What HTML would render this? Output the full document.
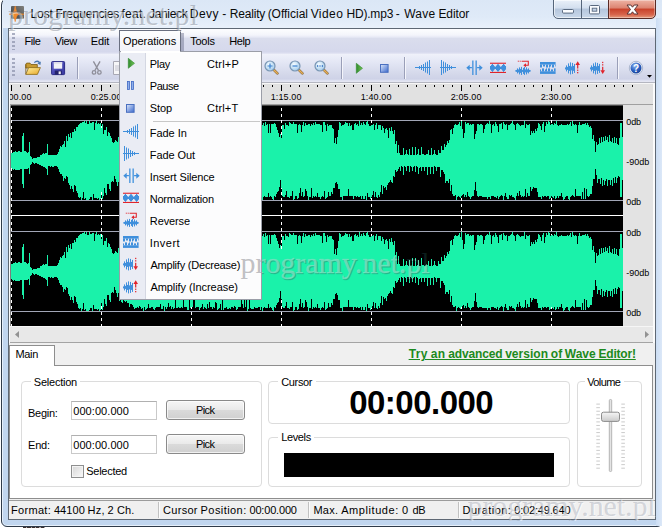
<!DOCTYPE html>
<html><head><meta charset="utf-8"><title>Wave Editor</title>
<style>
html,body{margin:0;padding:0}
body{width:662px;height:528px;overflow:hidden;background:#fff;position:relative;font-family:"Liberation Sans",sans-serif}
.t{position:absolute;white-space:pre;line-height:1}
#win{position:absolute;left:1px;top:-3px;width:660px;height:528px;border:1px solid #2f3b4a;border-radius:8px 8px 6px 6px;background:#c1d6ef;box-shadow:inset 0 0 0 1px #e6f0fb}
#titlegrad{position:absolute;left:3px;top:0;width:659px;height:28px;background:linear-gradient(#dbe7f6 0,#dfeaf8 17px,#e9f1fb 28px)}
#client{position:absolute;left:8px;top:28px;width:646px;height:490px;border:1px solid #5e6874;background:#f0f0f0}
#capmm{position:absolute;left:553px;top:-1px;width:55px;height:18px;border:1px solid #55657a;border-radius:0 0 0 5px;background:linear-gradient(#e9f0f9 0%,#d3dfee 45%,#b5c6dc 50%,#c9d8ea 100%);box-shadow:inset 0 0 0 1px rgba(255,255,255,.6)}
#capdiv{position:absolute;left:581px;top:0;width:1px;height:18px;background:#55657a}
#capx{position:absolute;left:608px;top:-1px;width:46px;height:18px;border:1px solid #5a2a24;border-radius:0 0 5px 0;background:linear-gradient(#eeb3a4 0%,#dc8370 45%,#c8412a 50%,#d7634a 80%,#e59a7c 100%);box-shadow:inset 0 0 0 1px rgba(255,255,255,.35)}
#menubar{position:absolute;left:9px;top:29px;width:646px;height:25px;background:linear-gradient(#fdfdff 0,#f4f5fb 6px,#e8eaf6 8px,#dadded 9.5px,#d5d8ec 23px,#e2e4f3 24.5px,#e8eaf6 25px)}
#toolbar{position:absolute;left:9px;top:54px;width:646px;height:28px;background:linear-gradient(#eff1fa 0,#e4e7f5 8px,#d4d8ea 20px,#ced2e7 25px,#dde0f0 26.5px,#e6e8f3 28px,#b4b6c0 28.4px,#b4b6c0 29px);height:29px}
.grip{position:absolute;width:3px;background:repeating-linear-gradient(#8a90aa 0,#8a90aa 2px,transparent 2px,transparent 4px);opacity:.7}
#opbtn{position:absolute;left:119px;top:30px;width:60px;height:23px;box-shadow:3px 3px 0 rgba(95,100,130,.42);border:1px solid #6a6f80;border-bottom:none;background:linear-gradient(#fdfdfe,#f0f1f8)}
#ruler{position:absolute;left:10px;top:83px;width:643px;height:22px;background:#e1e1e1;border-top:1px solid #f6f6f6;border-bottom:1px solid #a0a0a0;box-sizing:border-box}
#rulerclip{position:absolute;left:10px;top:83px;width:643px;height:22px;overflow:hidden}
#rulerclip .t{margin-left:-10px;margin-top:-83px}
#hscroll{position:absolute;left:10px;top:326px;width:643px;height:17px;background:#e8e8e8;border-top:1px solid #f6f6f6;border-bottom:1px solid #a4a4a4;box-sizing:border-box}
#dd{position:absolute;left:119px;top:51px;width:141px;height:247px;border:1px solid #9b9ea8;background:#fcfcfd;overflow:hidden}
#ddgut{position:absolute;left:0;top:0;width:25px;height:247px;background:#eaecf4;border-right:1px solid #d4d7e2}
#ddshadow{position:absolute;left:122px;top:55px;width:142px;height:247px;background:rgba(0,0,0,.18);border-radius:2px}
#tabbar{position:absolute;left:10px;top:343px;width:643px;height:23px;background:#f0f0f0}
#panel{position:absolute;left:9px;top:365px;width:644px;height:134px;border:1px solid #8e8e8e;background:#fff;box-sizing:border-box}
#tab{position:absolute;left:9px;top:345px;width:46px;height:21px;border:1px solid #8e8e8e;border-bottom:none;background:#fff;box-sizing:border-box}
.gb{position:absolute;border:1px solid #dcdcdc;border-radius:4px;box-sizing:border-box}
.inp{position:absolute;width:86px;height:19px;border:1px solid #c9c9c9;border-top-color:#b0b0b0;background:#fff;box-sizing:border-box}
.btn{position:absolute;width:79px;height:20px;border:1px solid #8a8a8a;border-radius:3px;background:linear-gradient(#f6f6f6 0%,#eaeaea 48%,#dadada 52%,#d0d0d0 100%);box-shadow:inset 0 0 0 1px rgba(255,255,255,.7);box-sizing:border-box}
#chk{position:absolute;left:71px;top:465px;width:13px;height:13px;border:1px solid #8e8f8f;background:linear-gradient(135deg,#d6d6d6,#fafafa);box-shadow:inset 0 0 0 1px #f4f4f4;box-sizing:border-box}
#status{position:absolute;left:9px;top:500px;width:646px;height:19px;background:#f0f0f0;border-top:1px solid #9c9c9c;box-sizing:border-box}
.wm{position:absolute;white-space:nowrap;font-family:"Liberation Serif",serif;line-height:1;letter-spacing:.5px}
</style></head>
<body>
<div id="win"></div>
<div id="titlegrad"></div>
<div style="position:absolute;left:656px;top:18px;width:6px;height:508px;background:linear-gradient(90deg,#cbddf3,#dce8f8)"></div>
<div id="client"></div>
<svg style="position:absolute;left:9px;top:5px;overflow:visible;" width="16" height="17" viewBox="0 0 16 17"><defs><linearGradient id="ai" x1="0" y1="1" x2="1" y2="0"><stop offset="0" stop-color="#3c4044"/><stop offset="1" stop-color="#80807c"/></linearGradient></defs><rect x="2" y="1" width="13" height="12.8" rx="1" fill="url(#ai)"/><path d="M.2 9.2h14.8" stroke="#f0842a" stroke-width="1.1"/><path d="M6.2 1.2C6.9 5.5 7.8 7.6 9.2 9.2C7.8 10.8 6.9 12.3 6.2 16.6C5.5 12.3 4.6 10.8 3.2 9.2C4.6 7.6 5.5 5.5 6.2 1.2z" fill="#f08a30" stroke="#f08a30" stroke-width=".7" stroke-linejoin="round"/></svg>
<div id="capmm"></div><div id="capdiv"></div><div id="capx"></div>
<svg style="position:absolute;left:562px;top:8.5px;overflow:visible;" width="12" height="5" viewBox="0 0 12 5"><rect x=".5" y=".5" width="11" height="3.6" rx="1" fill="#fafcff" stroke="#5a6a80" stroke-width="1"/></svg>
<svg style="position:absolute;left:589px;top:4.5px;overflow:visible;" width="11" height="9.5" viewBox="0 0 11 9.5"><rect x=".5" y=".5" width="10" height="8.4" rx="1" fill="#fafcff" stroke="#5a6a80" stroke-width="1"/><rect x="3.2" y="3.2" width="4.6" height="3" fill="#c3d2e6" stroke="#5a6a80" stroke-width=".9"/></svg>
<svg style="position:absolute;left:626px;top:3.5px;overflow:visible;" width="13" height="11" viewBox="0 0 13 11"><path d="M1 1h3.8l1.7 2.2l1.7-2.2h3.8l-3.5 4.5l3.5 4.5h-3.8l-1.7-2.2l-1.7 2.2h-3.8l3.5-4.5z" fill="#fff" stroke="#5a3434" stroke-width="1" stroke-linejoin="round"/></svg>
<div id="menubar"></div>
<div class="grip" style="left:12px;top:33px;height:17px"></div>
<div id="opbtn"></div>
<div id="toolbar"></div>
<div class="grip" style="left:12px;top:58px;height:20px"></div>
<div style="position:absolute;left:77px;top:57px;width:1px;height:22px;background:#9a9fb8"></div><div style="position:absolute;left:78px;top:57px;width:1px;height:22px;background:#f4f5fb"></div>
<div style="position:absolute;left:341px;top:57px;width:1px;height:22px;background:#9a9fb8"></div><div style="position:absolute;left:342px;top:57px;width:1px;height:22px;background:#f4f5fb"></div>
<div style="position:absolute;left:404px;top:57px;width:1px;height:22px;background:#9a9fb8"></div><div style="position:absolute;left:405px;top:57px;width:1px;height:22px;background:#f4f5fb"></div>
<div style="position:absolute;left:617px;top:57px;width:1px;height:22px;background:#9a9fb8"></div><div style="position:absolute;left:618px;top:57px;width:1px;height:22px;background:#f4f5fb"></div>
<svg style="position:absolute;left:25px;top:60px;overflow:visible;" width="17" height="16" viewBox="0 0 17 16"><path d="M.8 4.3l.8-1.2h3.4l1 1.4h6.3v3.5h-11.5z" fill="#c89a30" stroke="#7a5a12" stroke-width=".8"/><path d="M.8 14.3v-10" stroke="#7a5a12" stroke-width=".8"/><defs><linearGradient id="fg" x1="0" y1="0" x2="1" y2="1"><stop offset="0" stop-color="#fff0a0"/><stop offset="1" stop-color="#e8a828"/></linearGradient></defs><path d="M3.6 7.6h11.8l-3 6.8h-11.6z" fill="url(#fg)" stroke="#8a6818" stroke-width=".8" stroke-linejoin="round"/><path d="M9.3 2.6c1.9-2 4.4-1.7 5.3.4" fill="none" stroke="#4a78b0" stroke-width="1.3"/><path d="M15.9 1.4l-.5 3.6-3-1.5z" fill="#4a78b0"/></svg>
<svg style="position:absolute;left:50.6px;top:61px;overflow:visible;" width="15" height="14.5" viewBox="0 0 15 14.5"><defs><linearGradient id="sv" x1="0" y1="0" x2="1" y2="1"><stop offset="0" stop-color="#7a7ad8"/><stop offset=".5" stop-color="#4848b4"/><stop offset="1" stop-color="#3a3aa0"/></linearGradient></defs><rect x=".6" y=".6" width="13" height="13" rx=".8" fill="url(#sv)" stroke="#2a2a86" stroke-width="1"/><rect x="2.8" y="1.1" width="8.4" height="6.6" fill="#f2f2f6"/><rect x="2.8" y="1.1" width="8.4" height="1.6" fill="#dcdce8"/><rect x="3.8" y="9.6" width="7" height="4" fill="#22226a"/><rect x="7.6" y="10.4" width="2.2" height="2.8" fill="#eeeef4"/></svg>
<svg style="position:absolute;left:90.6px;top:60.8px;overflow:visible;" width="12" height="14" viewBox="0 0 13 15"><path d="M2.6 .4l5.6 9.8M9.8 .4l-5.6 9.8" stroke="#8f8f9a" stroke-width="1.5" fill="none"/><circle cx="3.3" cy="12.3" r="1.9" fill="none" stroke="#8f8f9a" stroke-width="1.4"/><circle cx="9.1" cy="12.3" r="1.9" fill="none" stroke="#8f8f9a" stroke-width="1.4"/></svg>
<svg style="position:absolute;left:113px;top:61px;overflow:visible;" width="10" height="14" viewBox="0 0 10 14"><path d="M.5 .5h6l3 3v10h-9z" fill="#f6f6f8" stroke="#a8a8b4"/><path d="M2 5h5M2 7h5M2 9h5" stroke="#b8b8c4" stroke-width=".8"/></svg>
<svg style="position:absolute;left:263.5px;top:59.5px;overflow:visible;" width="16" height="16" viewBox="0 0 16 16"><defs><radialGradient id="zg1" cx=".4" cy=".35" r=".7"><stop offset="0" stop-color="#f6fcff"/><stop offset="1" stop-color="#9cc8ea"/></radialGradient></defs><path d="M9.6 9.6l3.8 3.8" stroke="#8a6a3a" stroke-width="2.7" stroke-linecap="round"/><path d="M9.9 9.9l3.4 3.4" stroke="#e8b058" stroke-width="1.4" stroke-linecap="round"/><circle cx="6" cy="6" r="5" fill="url(#zg1)" stroke="#7a96b4" stroke-width="1.2"/><path d="M3.5 6h5M6 3.5v5" stroke="#3a80d0" stroke-width="1.2"/></svg>
<svg style="position:absolute;left:288.5px;top:59.5px;overflow:visible;" width="16" height="16" viewBox="0 0 16 16"><defs><radialGradient id="zg2" cx=".4" cy=".35" r=".7"><stop offset="0" stop-color="#f6fcff"/><stop offset="1" stop-color="#9cc8ea"/></radialGradient></defs><path d="M9.6 9.6l3.8 3.8" stroke="#8a6a3a" stroke-width="2.7" stroke-linecap="round"/><path d="M9.9 9.9l3.4 3.4" stroke="#e8b058" stroke-width="1.4" stroke-linecap="round"/><circle cx="6" cy="6" r="5" fill="url(#zg2)" stroke="#7a96b4" stroke-width="1.2"/><path d="M3.5 6h5" stroke="#3a80d0" stroke-width="1.2"/></svg>
<svg style="position:absolute;left:314px;top:59.5px;overflow:visible;" width="16" height="16" viewBox="0 0 16 16"><defs><radialGradient id="zg3" cx=".4" cy=".35" r=".7"><stop offset="0" stop-color="#f6fcff"/><stop offset="1" stop-color="#9cc8ea"/></radialGradient></defs><path d="M9.6 9.6l3.8 3.8" stroke="#8a6a3a" stroke-width="2.7" stroke-linecap="round"/><path d="M9.9 9.9l3.4 3.4" stroke="#e8b058" stroke-width="1.4" stroke-linecap="round"/><circle cx="6" cy="6" r="5" fill="url(#zg3)" stroke="#7a96b4" stroke-width="1.2"/><path d="M3.6 5.2v1.6M8.4 5.2v1.6" stroke="#2a6ac0" stroke-width="1.2"/><path d="M5.3 5.4h1.4v1.2h-1.4z" fill="#2a6ac0"/></svg>
<svg style="position:absolute;left:356.2px;top:62.7px;overflow:visible;" width="8" height="11" viewBox="0 0 8 11"><defs><linearGradient id="pga" x1="0" y1="0" x2="1" y2="0"><stop offset="0" stop-color="#2f8a2c"/><stop offset="1" stop-color="#74c456"/></linearGradient></defs><path d="M.3 .3l6.2 5l-6.2 5z" fill="url(#pga)" stroke="#2f8a2c" stroke-width=".6" stroke-linejoin="round"/></svg>
<svg style="position:absolute;left:380.2px;top:64.1px;overflow:visible;" width="9" height="9" viewBox="0 0 9 9"><defs><linearGradient id="sga" x1="0" y1="0" x2="1" y2="1"><stop offset="0" stop-color="#dde7fa"/><stop offset="1" stop-color="#3a68cc"/></linearGradient></defs><rect x=".5" y=".5" width="7.6" height="7.8" fill="url(#sga)" stroke="#4a70c0" stroke-width="1"/></svg>
<svg style="position:absolute;left:415px;top:60px;overflow:visible;" width="16" height="15" viewBox="0 0 16 15"><rect x="0" y="7.0" width="1" height="1" fill="#3f8fdc"/><rect x="1" y="7.0" width="1" height="1" fill="#3f8fdc"/><rect x="2" y="7.0" width="1" height="1" fill="#3f8fdc"/><rect x="3" y="7.0" width="1" height="1" fill="#3f8fdc"/><rect x="4" y="6.0" width="1" height="3" fill="#3f8fdc"/><rect x="5" y="7.0" width="1" height="1" fill="#3f8fdc"/><rect x="6" y="5.0" width="1" height="5" fill="#3f8fdc"/><rect x="7" y="7.0" width="1" height="1" fill="#3f8fdc"/><rect x="8" y="4.0" width="1" height="7" fill="#3f8fdc"/><rect x="9" y="7.0" width="1" height="1" fill="#3f8fdc"/><rect x="10" y="2.5" width="1" height="10" fill="#3f8fdc"/><rect x="11" y="7.0" width="1" height="1" fill="#3f8fdc"/><rect x="12" y="1.5" width="1" height="12" fill="#3f8fdc"/><rect x="13" y="7.0" width="1" height="1" fill="#3f8fdc"/><rect x="14" y="0.0" width="1" height="15" fill="#3f8fdc"/><rect x="15" y="7.0" width="1" height="1" fill="#3f8fdc"/></svg>
<svg style="position:absolute;left:440px;top:60px;overflow:visible;" width="16" height="15" viewBox="0 0 16 15"><rect x="0" y="7.0" width="1" height="1" fill="#3f8fdc"/><rect x="1" y="0.0" width="1" height="15" fill="#3f8fdc"/><rect x="2" y="7.0" width="1" height="1" fill="#3f8fdc"/><rect x="3" y="1.5" width="1" height="12" fill="#3f8fdc"/><rect x="4" y="7.0" width="1" height="1" fill="#3f8fdc"/><rect x="5" y="2.5" width="1" height="10" fill="#3f8fdc"/><rect x="6" y="7.0" width="1" height="1" fill="#3f8fdc"/><rect x="7" y="4.0" width="1" height="7" fill="#3f8fdc"/><rect x="8" y="7.0" width="1" height="1" fill="#3f8fdc"/><rect x="9" y="5.0" width="1" height="5" fill="#3f8fdc"/><rect x="10" y="7.0" width="1" height="1" fill="#3f8fdc"/><rect x="11" y="6.0" width="1" height="3" fill="#3f8fdc"/><rect x="12" y="7.0" width="1" height="1" fill="#3f8fdc"/><rect x="13" y="7.0" width="1" height="1" fill="#3f8fdc"/><rect x="14" y="7.0" width="1" height="1" fill="#3f8fdc"/><rect x="15" y="7.0" width="1" height="1" fill="#3f8fdc"/></svg>
<svg style="position:absolute;left:465.5px;top:60px;overflow:visible;" width="16" height="15" viewBox="0 0 16 15"><rect x="6.2" y="0.5" width="1.3" height="14.5" fill="#3f8fdc"/><rect x="9.5" y="0.5" width="1.3" height="14.5" fill="#3f8fdc"/><path d="M0.3 7.7l3.4-3v2.4h2.2v1.2h-2.2v2.4z" fill="#3f8fdc"/><path d="M16.7 7.7l-3.4-3v2.4h-2.2v1.2h2.2v2.4z" fill="#3f8fdc"/></svg>
<svg style="position:absolute;left:490px;top:60px;overflow:visible;" width="16" height="15" viewBox="0 0 16 15"><rect x="0" y="2.7" width="16" height="1.1" fill="#e0242c"/><rect x="0" y="11.9" width="16" height="1.1" fill="#e0242c"/><rect x="0" y="5.99" width="1.02" height="3.72" fill="#3f8fdc"/><rect x="1" y="4.81" width="1.02" height="6.08" fill="#3f8fdc"/><rect x="2" y="3.87" width="1.02" height="7.96" fill="#3f8fdc"/><rect x="3" y="5.05" width="1.02" height="5.61" fill="#3f8fdc"/><rect x="4" y="6.22" width="1.02" height="3.25" fill="#3f8fdc"/><rect x="5" y="6.70" width="1.02" height="2.31" fill="#3f8fdc"/><rect x="6" y="5.52" width="1.02" height="4.66" fill="#3f8fdc"/><rect x="7" y="4.34" width="1.02" height="7.02" fill="#3f8fdc"/><rect x="8" y="4.34" width="1.02" height="7.02" fill="#3f8fdc"/><rect x="9" y="5.52" width="1.02" height="4.66" fill="#3f8fdc"/><rect x="10" y="6.70" width="1.02" height="2.31" fill="#3f8fdc"/><rect x="11" y="6.22" width="1.02" height="3.25" fill="#3f8fdc"/><rect x="12" y="5.05" width="1.02" height="5.61" fill="#3f8fdc"/><rect x="13" y="3.87" width="1.02" height="7.96" fill="#3f8fdc"/><rect x="14" y="4.81" width="1.02" height="6.08" fill="#3f8fdc"/><rect x="15" y="5.99" width="1.02" height="3.72" fill="#3f8fdc"/></svg>
<svg style="position:absolute;left:515px;top:60px;overflow:visible;" width="16" height="16" viewBox="0 0 16 16"><rect x="0" y="10.4" width="1" height="1" fill="#3f8fdc"/><rect x="1" y="9.9" width="1" height="2" fill="#3f8fdc"/><rect x="2" y="8.4" width="1" height="5" fill="#3f8fdc"/><rect x="3" y="9.4" width="1" height="3" fill="#3f8fdc"/><rect x="4" y="7.4" width="1" height="7" fill="#3f8fdc"/><rect x="5" y="8.9" width="1" height="4" fill="#3f8fdc"/><rect x="6" y="6.9" width="1" height="8" fill="#3f8fdc"/><rect x="7" y="9.9" width="1" height="2" fill="#3f8fdc"/><rect x="8" y="7.9" width="1" height="6" fill="#3f8fdc"/><rect x="9" y="6.9" width="1" height="8" fill="#3f8fdc"/><rect x="10" y="9.4" width="1" height="3" fill="#3f8fdc"/><rect x="11" y="7.4" width="1" height="7" fill="#3f8fdc"/><rect x="12" y="9.4" width="1" height="3" fill="#3f8fdc"/><rect x="13" y="8.4" width="1" height="5" fill="#3f8fdc"/><rect x="14" y="9.9" width="1" height="2" fill="#3f8fdc"/><rect x="15" y="10.4" width="1" height="1" fill="#3f8fdc"/><path d="M6.6 1.2h6.7v4h-2.4" fill="none" stroke="#e0242c" stroke-width="1.05"/><path d="M11 3.2l-2.7 2l2.7 2z" fill="#e0242c"/><rect x="2.8" y=".7" width="1" height="1" fill="#e0242c"/><rect x="4.7" y=".7" width="1" height="1" fill="#e0242c"/></svg>
<svg style="position:absolute;left:540.3px;top:61px;overflow:visible;" width="16" height="14" viewBox="0 0 16 14"><rect x="0" y="1" width="15.6" height="2.6" fill="#3f8fdc"/><rect x="0" y="10.3" width="15.6" height="2.6" fill="#3f8fdc"/><rect x="0" y="3.5" width="1" height="3" fill="#3f8fdc"/><rect x="1" y="3.5" width="1" height="3" fill="#3f8fdc"/><rect x="3" y="3.5" width="1" height="2" fill="#3f8fdc"/><rect x="4" y="3.5" width="1" height="2" fill="#3f8fdc"/><rect x="6" y="3.5" width="1" height="3" fill="#3f8fdc"/><rect x="7" y="3.5" width="1" height="3" fill="#3f8fdc"/><rect x="9" y="3.5" width="1" height="3" fill="#3f8fdc"/><rect x="10" y="3.5" width="1" height="2" fill="#3f8fdc"/><rect x="12" y="3.5" width="1" height="3" fill="#3f8fdc"/><rect x="13" y="3.5" width="1" height="3" fill="#3f8fdc"/><rect x="15" y="3.5" width="0.6" height="2" fill="#3f8fdc"/><rect x="0" y="8.4" width="1" height="2" fill="#3f8fdc"/><rect x="2" y="7.4" width="1" height="3" fill="#3f8fdc"/><rect x="3" y="7.4" width="1" height="3" fill="#3f8fdc"/><rect x="5" y="8.4" width="1" height="2" fill="#3f8fdc"/><rect x="6" y="7.4" width="1" height="3" fill="#3f8fdc"/><rect x="8" y="7.4" width="1" height="3" fill="#3f8fdc"/><rect x="9" y="7.4" width="1" height="3" fill="#3f8fdc"/><rect x="11" y="8.4" width="1" height="2" fill="#3f8fdc"/><rect x="12" y="8.4" width="1" height="2" fill="#3f8fdc"/><rect x="14" y="7.4" width="1" height="3" fill="#3f8fdc"/><rect x="15" y="7.4" width="0.6" height="3" fill="#3f8fdc"/></svg>
<svg style="position:absolute;left:565px;top:60px;overflow:visible;" width="16" height="16" viewBox="0 0 16 16"><rect x="0" y="7.4" width="1" height="2" fill="#3f8fdc"/><rect x="1" y="5.4" width="1" height="6" fill="#3f8fdc"/><rect x="2" y="6.9" width="1" height="3" fill="#3f8fdc"/><rect x="3" y="3.4" width="1" height="10" fill="#3f8fdc"/><rect x="4" y="5.9" width="1" height="5" fill="#3f8fdc"/><rect x="5" y="2.4" width="1" height="12" fill="#3f8fdc"/><rect x="6" y="6.4" width="1" height="4" fill="#3f8fdc"/><rect x="7" y="2.9" width="1" height="11" fill="#3f8fdc"/><rect x="8" y="5.9" width="1" height="5" fill="#3f8fdc"/><rect x="9" y="3.9" width="1" height="9" fill="#3f8fdc"/><path d="M12.7 1.3l2.3 3.6h-4.6z" fill="#e0242c"/><rect x="12.1" y="4.5" width="1.2" height="4" fill="#e0242c"/><rect x="12.1" y="9.6" width="1.2" height="1.3" fill="#e0242c"/><rect x="12.1" y="12" width="1.2" height="1.3" fill="#e0242c"/></svg>
<svg style="position:absolute;left:590px;top:60px;overflow:visible;" width="16" height="16" viewBox="0 0 16 16"><rect x="0" y="7.4" width="1" height="2" fill="#3f8fdc"/><rect x="1" y="5.4" width="1" height="6" fill="#3f8fdc"/><rect x="2" y="6.9" width="1" height="3" fill="#3f8fdc"/><rect x="3" y="3.4" width="1" height="10" fill="#3f8fdc"/><rect x="4" y="5.9" width="1" height="5" fill="#3f8fdc"/><rect x="5" y="2.4" width="1" height="12" fill="#3f8fdc"/><rect x="6" y="6.4" width="1" height="4" fill="#3f8fdc"/><rect x="7" y="2.9" width="1" height="11" fill="#3f8fdc"/><rect x="8" y="5.9" width="1" height="5" fill="#3f8fdc"/><rect x="9" y="3.9" width="1" height="9" fill="#3f8fdc"/><path d="M12.7 13.9l2.3-3.6h-4.6z" fill="#e0242c"/><rect x="12.1" y="6.8" width="1.2" height="4" fill="#e0242c"/><rect x="12.1" y="1.8" width="1.2" height="1.3" fill="#e0242c"/><rect x="12.1" y="4.2" width="1.2" height="1.3" fill="#e0242c"/></svg>
<svg style="position:absolute;left:629px;top:61px;overflow:visible;" width="14" height="14" viewBox="0 0 14 14"><defs><radialGradient id="hg" cx=".4" cy=".3" r=".8"><stop offset="0" stop-color="#8fb8f0"/><stop offset=".55" stop-color="#2a5ec0"/><stop offset="1" stop-color="#123a8a"/></radialGradient></defs><circle cx="7" cy="7" r="6.7" fill="#eef2fa" stroke="#9aa8c4" stroke-width=".8"/><circle cx="7" cy="7" r="5.5" fill="url(#hg)"/><text x="7" y="10.6" text-anchor="middle" font-family="Liberation Sans, sans-serif" font-weight="bold" font-size="10" fill="#fff">?</text></svg>
<svg style="position:absolute;left:647px;top:75px;overflow:visible;" width="5" height="3" viewBox="0 0 5 3"><path d="M0 0h5l-2.5 2.8z" fill="#000"/></svg>
<div style="position:absolute;left:9px;top:83px;width:2px;height:260px;background:#fbfbfb"></div><div style="position:absolute;left:653px;top:83px;width:2px;height:260px;background:#fbfbfb"></div>
<div id="ruler"></div>
<svg style="position:absolute;left:0;top:0" width="662" height="110" shape-rendering="crispEdges"><rect x="11" y="85" width="1" height="6" fill="#000"/><rect x="20" y="85" width="1" height="2" fill="#000"/><rect x="29" y="85" width="1" height="2" fill="#000"/><rect x="38" y="85" width="1" height="2" fill="#000"/><rect x="47" y="85" width="1" height="2" fill="#000"/><rect x="56" y="85" width="1" height="2" fill="#000"/><rect x="65" y="85" width="1" height="2" fill="#000"/><rect x="74" y="85" width="1" height="2" fill="#000"/><rect x="83" y="85" width="1" height="2" fill="#000"/><rect x="92" y="85" width="1" height="2" fill="#000"/><rect x="101" y="85" width="1" height="6" fill="#000"/><rect x="110" y="85" width="1" height="2" fill="#000"/><rect x="119" y="85" width="1" height="2" fill="#000"/><rect x="128" y="85" width="1" height="2" fill="#000"/><rect x="137" y="85" width="1" height="2" fill="#000"/><rect x="146" y="85" width="1" height="2" fill="#000"/><rect x="155" y="85" width="1" height="2" fill="#000"/><rect x="164" y="85" width="1" height="2" fill="#000"/><rect x="173" y="85" width="1" height="2" fill="#000"/><rect x="182" y="85" width="1" height="2" fill="#000"/><rect x="191" y="85" width="1" height="6" fill="#000"/><rect x="200" y="85" width="1" height="2" fill="#000"/><rect x="209" y="85" width="1" height="2" fill="#000"/><rect x="218" y="85" width="1" height="2" fill="#000"/><rect x="227" y="85" width="1" height="2" fill="#000"/><rect x="236" y="85" width="1" height="2" fill="#000"/><rect x="245" y="85" width="1" height="2" fill="#000"/><rect x="254" y="85" width="1" height="2" fill="#000"/><rect x="263" y="85" width="1" height="2" fill="#000"/><rect x="272" y="85" width="1" height="2" fill="#000"/><rect x="281" y="85" width="1" height="6" fill="#000"/><rect x="290" y="85" width="1" height="2" fill="#000"/><rect x="299" y="85" width="1" height="2" fill="#000"/><rect x="308" y="85" width="1" height="2" fill="#000"/><rect x="317" y="85" width="1" height="2" fill="#000"/><rect x="326" y="85" width="1" height="2" fill="#000"/><rect x="335" y="85" width="1" height="2" fill="#000"/><rect x="344" y="85" width="1" height="2" fill="#000"/><rect x="353" y="85" width="1" height="2" fill="#000"/><rect x="362" y="85" width="1" height="2" fill="#000"/><rect x="371" y="85" width="1" height="6" fill="#000"/><rect x="380" y="85" width="1" height="2" fill="#000"/><rect x="389" y="85" width="1" height="2" fill="#000"/><rect x="398" y="85" width="1" height="2" fill="#000"/><rect x="407" y="85" width="1" height="2" fill="#000"/><rect x="416" y="85" width="1" height="2" fill="#000"/><rect x="425" y="85" width="1" height="2" fill="#000"/><rect x="434" y="85" width="1" height="2" fill="#000"/><rect x="443" y="85" width="1" height="2" fill="#000"/><rect x="452" y="85" width="1" height="2" fill="#000"/><rect x="461" y="85" width="1" height="6" fill="#000"/><rect x="470" y="85" width="1" height="2" fill="#000"/><rect x="479" y="85" width="1" height="2" fill="#000"/><rect x="488" y="85" width="1" height="2" fill="#000"/><rect x="497" y="85" width="1" height="2" fill="#000"/><rect x="506" y="85" width="1" height="2" fill="#000"/><rect x="515" y="85" width="1" height="2" fill="#000"/><rect x="524" y="85" width="1" height="2" fill="#000"/><rect x="533" y="85" width="1" height="2" fill="#000"/><rect x="542" y="85" width="1" height="2" fill="#000"/><rect x="551" y="85" width="1" height="6" fill="#000"/><rect x="560" y="85" width="1" height="2" fill="#000"/><rect x="569" y="85" width="1" height="2" fill="#000"/><rect x="578" y="85" width="1" height="2" fill="#000"/><rect x="587" y="85" width="1" height="2" fill="#000"/><rect x="596" y="85" width="1" height="2" fill="#000"/><rect x="605" y="85" width="1" height="2" fill="#000"/><rect x="614" y="85" width="1" height="2" fill="#000"/><rect x="623" y="85" width="1" height="2" fill="#000"/><rect x="632" y="85" width="1" height="2" fill="#000"/></svg>
<div id="rulerclip">
<span class="t" id="t19" style="left:0.6454545454545462px;top:93.08px;font-size:9px;color:#000;letter-spacing:0.123px;">0:00.00</span><span class="t" id="t20" style="left:90.64545454545454px;top:93.08px;font-size:9px;color:#000;letter-spacing:0.123px;">0:25.00</span><span class="t" id="t21" style="left:180.64545454545456px;top:93.08px;font-size:9px;color:#000;letter-spacing:0.123px;">0:50.00</span><span class="t" id="t22" style="left:270.6454545454546px;top:93.08px;font-size:9px;color:#000;letter-spacing:0.123px;">1:15.00</span><span class="t" id="t23" style="left:360.6454545454546px;top:93.08px;font-size:9px;color:#000;letter-spacing:0.123px;">1:40.00</span><span class="t" id="t24" style="left:450.6454545454546px;top:93.08px;font-size:9px;color:#000;letter-spacing:0.123px;">2:05.00</span><span class="t" id="t25" style="left:540.6454545454545px;top:93.08px;font-size:9px;color:#000;letter-spacing:0.123px;">2:30.00</span></div>
<svg style="position:absolute;left:0;top:0" width="662" height="330" shape-rendering="crispEdges"><rect x="10.5" y="105.3" width="612.5" height="220.7" fill="#000" shape-rendering="auto"/><rect x="10.5" y="120" width="612.5" height="1" fill="#a2a6b6"/><rect x="10.5" y="200" width="612.5" height="1" fill="#a2a6b6"/><rect x="10.5" y="231" width="612.5" height="1" fill="#a2a6b6"/><rect x="10.5" y="311" width="612.5" height="1" fill="#a2a6b6"/><rect x="10.5" y="215" width="612.5" height="1" fill="#fff"/><path d="M11.5 105V326" stroke="#fff" stroke-width="1" stroke-dasharray="3 3" stroke-dashoffset="3" fill="none"/><path d="M101.5 105V326" stroke="#fff" stroke-width="1" stroke-dasharray="3 3" stroke-dashoffset="3" fill="none"/><path d="M191.5 105V326" stroke="#fff" stroke-width="1" stroke-dasharray="3 3" stroke-dashoffset="3" fill="none"/><path d="M281.5 105V326" stroke="#fff" stroke-width="1" stroke-dasharray="3 3" stroke-dashoffset="3" fill="none"/><path d="M371.5 105V326" stroke="#fff" stroke-width="1" stroke-dasharray="3 3" stroke-dashoffset="3" fill="none"/><path d="M461.5 105V326" stroke="#fff" stroke-width="1" stroke-dasharray="3 3" stroke-dashoffset="3" fill="none"/><path d="M551.5 105V326" stroke="#fff" stroke-width="1" stroke-dasharray="3 3" stroke-dashoffset="3" fill="none"/><text x="240.5" y="273.3" font-family="Liberation Serif, serif" font-size="30" fill="#0b1d1c" textLength="189">programy.net.pl</text><path id="wf1" d="M11 153.4h1V167.6h-1zM12 153.0h1V168.9h-1zM13 151.8h1V169.5h-1zM14 151.5h1V169.1h-1zM15 151.1h1V169.8h-1zM16 152.0h1V169.6h-1zM17 152.1h1V169.5h-1zM18 151.0h1V170.0h-1zM19 151.1h1V170.0h-1zM20 152.0h1V169.2h-1zM21 151.6h1V169.3h-1zM22 136.4h1V183.6h-1zM23 133.0h1V188.0h-1zM24 150.9h1V169.1h-1zM25 151.2h1V169.3h-1zM26 152.3h1V169.1h-1zM27 152.8h1V169.3h-1zM28 152.1h1V168.1h-1zM29 142.4h1V174.0h-1zM30 156.0h1V165.3h-1zM31 157.4h1V163.6h-1zM32 158.5h1V162.4h-1zM33 158.1h1V162.6h-1zM34 157.6h1V163.6h-1zM35 158.1h1V163.0h-1zM36 157.9h1V163.1h-1zM37 157.4h1V163.9h-1zM38 157.0h1V164.3h-1zM39 156.7h1V165.0h-1zM40 155.4h1V165.0h-1zM41 155.0h1V165.8h-1zM42 154.2h1V166.0h-1zM43 153.4h1V166.9h-1zM44 153.7h1V167.3h-1zM45 152.9h1V167.9h-1zM46 153.1h1V168.8h-1zM47 143.6h1V175.2h-1zM48 154.6h1V166.0h-1zM49 154.7h1V166.4h-1zM50 154.9h1V166.7h-1zM51 154.6h1V166.0h-1zM52 154.9h1V166.9h-1zM53 154.8h1V166.7h-1zM54 154.7h1V166.3h-1zM55 154.8h1V166.4h-1zM56 154.6h1V166.1h-1zM57 154.0h1V167.1h-1zM58 151.5h1V168.7h-1zM59 149.1h1V171.5h-1zM60 145.8h1V174.1h-1zM61 147.1h1V173.6h-1zM62 145.3h1V176.0h-1zM63 144.2h1V180.7h-1zM64 140.8h1V178.0h-1zM65 147.4h1V179.1h-1zM66 136.1h1V175.6h-1zM67 141.2h1V176.7h-1zM68 133.8h1V183.4h-1zM69 137.3h1V184.7h-1zM70 133.4h1V188.6h-1zM71 137.9h1V185.9h-1zM72 132.0h1V188.8h-1zM73 132.1h1V191.5h-1zM74 129.2h1V185.3h-1zM75 130.8h1V185.5h-1zM76 126.9h1V191.2h-1zM77 126.6h1V192.8h-1zM78 124.8h1V196.8h-1zM79 124.1h1V197.7h-1zM80 122.5h1V197.4h-1zM81 122.5h1V200.1h-1zM82 122.1h1V197.7h-1zM83 122.3h1V192.2h-1zM84 120.9h1V198.9h-1zM85 122.6h1V198.2h-1zM86 120.9h1V199.8h-1zM87 124.1h1V199.7h-1zM88 123.8h1V200.1h-1zM89 120.9h1V198.8h-1zM90 122.8h1V196.9h-1zM91 123.0h1V197.1h-1zM92 122.0h1V200.1h-1zM93 122.2h1V193.9h-1zM94 129.7h1V197.7h-1zM95 123.2h1V197.8h-1zM96 120.9h1V197.8h-1zM97 123.8h1V198.6h-1zM98 123.0h1V198.3h-1zM99 123.8h1V200.1h-1zM100 123.0h1V198.5h-1zM101 127.6h1V191.5h-1zM102 123.6h1V199.1h-1zM103 133.5h1V195.6h-1zM104 130.1h1V188.4h-1zM105 130.4h1V193.1h-1zM106 126.7h1V195.1h-1zM107 135.5h1V184.3h-1zM108 132.1h1V184.2h-1zM109 133.0h1V188.7h-1zM110 135.6h1V191.4h-1zM111 137.9h1V182.2h-1zM112 141.5h1V181.3h-1zM113 143.4h1V181.6h-1zM114 141.5h1V176.3h-1zM115 140.2h1V178.9h-1zM116 141.3h1V181.8h-1zM117 141.9h1V185.8h-1zM118 137.1h1V182.4h-1zM119 131.8h1V190.0h-1zM120 135.2h1V186.2h-1zM121 133.5h1V190.9h-1zM122 132.6h1V192.0h-1zM123 132.0h1V187.3h-1zM124 134.1h1V189.9h-1zM125 131.3h1V190.8h-1zM126 126.6h1V190.2h-1zM127 130.2h1V192.2h-1zM128 128.6h1V192.2h-1zM129 128.9h1V195.8h-1zM130 127.4h1V193.2h-1zM131 132.2h1V193.0h-1zM132 126.9h1V194.3h-1zM133 125.9h1V196.0h-1zM134 124.3h1V197.9h-1zM135 122.8h1V197.0h-1zM136 128.6h1V197.1h-1zM137 123.9h1V195.7h-1zM138 125.2h1V196.7h-1zM139 129.0h1V195.4h-1zM140 123.6h1V196.2h-1zM141 124.3h1V197.6h-1zM142 125.0h1V196.5h-1zM143 124.0h1V199.5h-1zM144 124.5h1V196.4h-1zM145 130.7h1V199.0h-1zM146 124.6h1V197.6h-1zM147 125.4h1V196.8h-1zM148 122.3h1V193.0h-1zM149 123.5h1V197.4h-1zM150 125.4h1V196.7h-1zM151 124.0h1V196.1h-1zM152 123.5h1V196.3h-1zM153 124.5h1V198.1h-1zM154 122.6h1V199.0h-1zM155 124.4h1V196.9h-1zM156 124.6h1V196.3h-1zM157 132.9h1V196.2h-1zM158 124.4h1V195.8h-1zM159 122.6h1V195.6h-1zM160 125.2h1V192.5h-1zM161 125.3h1V198.2h-1zM162 122.0h1V198.0h-1zM163 124.7h1V195.4h-1zM164 124.7h1V199.9h-1zM165 128.1h1V195.7h-1zM166 124.9h1V198.1h-1zM167 125.0h1V196.4h-1zM168 125.0h1V191.9h-1zM169 124.2h1V195.5h-1zM170 123.4h1V195.3h-1zM171 122.8h1V198.1h-1zM172 121.7h1V195.8h-1zM173 124.6h1V197.5h-1zM174 125.6h1V196.8h-1zM175 125.5h1V188.4h-1zM176 122.2h1V196.9h-1zM177 125.3h1V197.1h-1zM178 124.4h1V196.2h-1zM179 125.1h1V196.5h-1zM180 128.5h1V196.8h-1zM181 124.8h1V195.7h-1zM182 125.6h1V197.1h-1zM183 125.5h1V188.4h-1zM184 123.6h1V196.4h-1zM185 123.9h1V196.2h-1zM186 122.2h1V195.6h-1zM187 125.4h1V199.3h-1zM188 127.8h1V199.3h-1zM189 125.7h1V187.7h-1zM190 130.9h1V197.2h-1zM191 123.8h1V195.8h-1zM192 122.8h1V195.6h-1zM193 121.1h1V188.1h-1zM194 122.1h1V188.5h-1zM195 124.2h1V197.4h-1zM196 124.3h1V195.6h-1zM197 124.3h1V195.8h-1zM198 124.6h1V195.5h-1zM199 124.5h1V199.1h-1zM200 124.7h1V196.8h-1zM201 129.6h1V196.1h-1zM202 125.5h1V192.5h-1zM203 124.0h1V197.7h-1zM204 123.5h1V196.3h-1zM205 123.5h1V196.5h-1zM206 124.7h1V197.5h-1zM207 133.1h1V192.9h-1zM208 125.0h1V196.8h-1zM209 121.5h1V190.9h-1zM210 123.9h1V196.0h-1zM211 122.4h1V195.5h-1zM212 121.5h1V197.6h-1zM213 123.6h1V195.7h-1zM214 124.6h1V196.6h-1zM215 123.7h1V190.7h-1zM216 123.8h1V192.0h-1zM217 125.7h1V199.1h-1zM218 125.3h1V198.4h-1zM219 124.6h1V197.2h-1zM220 125.6h1V193.4h-1zM221 124.9h1V199.1h-1zM222 122.4h1V188.7h-1zM223 125.1h1V198.9h-1zM224 124.1h1V197.2h-1zM225 128.3h1V197.2h-1zM226 123.7h1V196.0h-1zM227 123.0h1V197.5h-1zM228 124.6h1V197.5h-1zM229 124.3h1V196.5h-1zM230 122.6h1V197.7h-1zM231 124.7h1V196.4h-1zM232 124.6h1V195.7h-1zM233 124.4h1V197.3h-1zM234 123.5h1V195.4h-1zM235 124.4h1V196.0h-1zM236 123.5h1V199.3h-1zM237 124.5h1V197.6h-1zM238 125.2h1V195.7h-1zM239 123.7h1V196.0h-1zM240 123.4h1V196.2h-1zM241 128.3h1V187.6h-1zM242 122.5h1V193.0h-1zM243 123.9h1V196.8h-1zM244 125.7h1V187.7h-1zM245 122.5h1V195.9h-1zM246 125.6h1V187.8h-1zM247 121.2h1V200.0h-1zM248 124.1h1V198.1h-1zM249 125.3h1V188.6h-1zM250 125.6h1V196.6h-1zM251 125.4h1V197.7h-1zM252 128.3h1V198.3h-1zM253 123.5h1V198.4h-1zM254 123.3h1V195.9h-1zM255 123.4h1V197.0h-1zM256 125.6h1V197.1h-1zM257 124.3h1V196.6h-1zM258 124.4h1V195.8h-1zM259 123.5h1V195.7h-1zM260 123.7h1V198.5h-1zM261 127.8h1V196.3h-1zM262 125.4h1V199.7h-1zM263 123.3h1V196.6h-1zM264 125.5h1V196.4h-1zM265 121.8h1V196.5h-1zM266 124.9h1V196.7h-1zM267 123.5h1V197.3h-1zM268 133.4h1V192.8h-1zM269 123.9h1V196.8h-1zM270 133.3h1V196.4h-1zM271 123.6h1V196.6h-1zM272 124.2h1V198.9h-1zM273 123.8h1V199.7h-1zM274 123.3h1V195.8h-1zM275 123.6h1V197.4h-1zM276 127.3h1V194.0h-1zM277 129.8h1V192.4h-1zM278 133.4h1V190.5h-1zM279 136.9h1V186.8h-1zM280 133.9h1V180.4h-1zM281 138.2h1V187.9h-1zM282 124.6h1V195.6h-1zM283 124.8h1V197.4h-1zM284 128.6h1V196.7h-1zM285 122.9h1V195.3h-1zM286 125.3h1V191.2h-1zM287 124.7h1V196.9h-1zM288 125.5h1V197.0h-1zM289 122.1h1V197.7h-1zM290 123.0h1V196.3h-1zM291 123.7h1V196.3h-1zM292 123.6h1V191.1h-1zM293 121.7h1V199.9h-1zM294 124.3h1V198.5h-1zM295 123.6h1V196.0h-1zM296 124.1h1V195.8h-1zM297 132.9h1V199.1h-1zM298 124.8h1V197.5h-1zM299 123.9h1V193.1h-1zM300 125.0h1V188.3h-1zM301 132.4h1V195.6h-1zM302 124.7h1V192.4h-1zM303 122.0h1V197.3h-1zM304 125.6h1V196.2h-1zM305 122.5h1V189.3h-1zM306 125.4h1V190.8h-1zM307 125.1h1V195.8h-1zM308 124.2h1V199.5h-1zM309 124.4h1V196.8h-1zM310 125.6h1V197.4h-1zM311 124.3h1V188.1h-1zM312 125.2h1V197.7h-1zM313 123.3h1V195.7h-1zM314 124.9h1V196.7h-1zM315 121.9h1V196.4h-1zM316 123.6h1V196.5h-1zM317 123.7h1V192.9h-1zM318 124.4h1V197.4h-1zM319 124.4h1V197.3h-1zM320 125.0h1V199.4h-1zM321 124.9h1V196.7h-1zM322 131.7h1V196.2h-1zM323 121.9h1V197.0h-1zM324 122.2h1V191.1h-1zM325 125.4h1V199.0h-1zM326 130.5h1V198.2h-1zM327 123.5h1V196.5h-1zM328 125.5h1V191.6h-1zM329 125.4h1V196.4h-1zM330 125.1h1V195.7h-1zM331 124.5h1V192.2h-1zM332 127.8h1V193.5h-1zM333 128.7h1V188.2h-1zM334 142.9h1V188.0h-1zM335 137.8h1V182.5h-1zM336 144.4h1V182.0h-1zM337 136.6h1V184.2h-1zM338 130.3h1V189.4h-1zM339 121.7h1V189.0h-1zM340 123.4h1V197.0h-1zM341 125.6h1V197.1h-1zM342 125.2h1V200.0h-1zM343 124.5h1V195.7h-1zM344 124.1h1V195.7h-1zM345 121.8h1V195.6h-1zM346 122.8h1V196.2h-1zM347 123.3h1V195.9h-1zM348 125.7h1V189.3h-1zM349 122.9h1V196.1h-1zM350 125.5h1V196.2h-1zM351 124.6h1V196.1h-1zM352 130.2h1V196.1h-1zM353 130.0h1V198.6h-1zM354 124.4h1V196.0h-1zM355 122.9h1V195.8h-1zM356 125.1h1V196.7h-1zM357 123.9h1V196.3h-1zM358 125.5h1V196.5h-1zM359 121.1h1V196.8h-1zM360 125.4h1V195.7h-1zM361 123.3h1V199.0h-1zM362 125.1h1V196.3h-1zM363 122.1h1V199.4h-1zM364 123.5h1V199.4h-1zM365 124.6h1V196.0h-1zM366 121.7h1V199.9h-1zM367 121.1h1V193.0h-1zM368 124.4h1V196.5h-1zM369 125.5h1V196.5h-1zM370 125.7h1V199.4h-1zM371 124.7h1V196.6h-1zM372 124.6h1V195.4h-1zM373 123.9h1V190.7h-1zM374 129.6h1V197.1h-1zM375 124.6h1V191.5h-1zM376 122.5h1V196.8h-1zM377 128.6h1V198.4h-1zM378 125.1h1V195.4h-1zM379 124.7h1V197.0h-1zM380 124.8h1V192.2h-1zM381 129.9h1V184.9h-1zM382 126.0h1V194.4h-1zM383 127.8h1V185.9h-1zM384 133.3h1V188.2h-1zM385 129.1h1V187.1h-1zM386 127.6h1V189.6h-1zM387 130.1h1V184.8h-1zM388 137.8h1V182.9h-1zM389 128.1h1V181.7h-1zM390 130.6h1V180.2h-1zM391 126.9h1V181.8h-1zM392 130.5h1V182.6h-1zM393 134.1h1V176.4h-1zM394 129.9h1V177.4h-1zM395 144.3h1V170.0h-1zM396 140.6h1V171.8h-1zM397 153.4h1V171.4h-1zM398 144.8h1V168.6h-1zM399 153.0h1V167.3h-1zM400 155.3h1V170.8h-1zM401 155.0h1V166.1h-1zM402 155.1h1V167.3h-1zM403 147.5h1V174.5h-1zM404 154.7h1V166.2h-1zM405 154.2h1V166.7h-1zM406 149.9h1V170.6h-1zM407 153.8h1V166.2h-1zM408 155.2h1V166.2h-1zM409 149.1h1V172.3h-1zM410 154.8h1V166.1h-1zM411 154.5h1V167.1h-1zM412 147.0h1V171.0h-1zM413 155.2h1V167.2h-1zM414 154.5h1V166.3h-1zM415 146.7h1V172.1h-1zM416 154.8h1V165.5h-1zM417 154.4h1V166.5h-1zM418 148.5h1V173.7h-1zM419 155.1h1V167.5h-1zM420 155.3h1V167.2h-1zM421 146.9h1V170.9h-1zM422 154.4h1V167.2h-1zM423 153.8h1V167.3h-1zM424 155.4h1V171.0h-1zM425 154.6h1V167.0h-1zM426 153.5h1V166.9h-1zM427 154.4h1V174.5h-1zM428 150.1h1V167.2h-1zM429 154.9h1V166.8h-1zM430 155.4h1V173.7h-1zM431 148.2h1V167.4h-1zM432 155.1h1V166.9h-1zM433 154.0h1V173.9h-1zM434 150.4h1V165.9h-1zM435 154.4h1V167.4h-1zM436 155.1h1V171.1h-1zM437 154.6h1V166.5h-1zM438 149.9h1V167.0h-1zM439 152.9h1V167.1h-1zM440 153.0h1V176.5h-1zM441 145.7h1V169.5h-1zM442 150.1h1V170.1h-1zM443 149.6h1V172.3h-1zM444 143.7h1V173.5h-1zM445 146.6h1V182.6h-1zM446 144.6h1V180.9h-1zM447 140.7h1V180.7h-1zM448 142.8h1V182.6h-1zM449 140.1h1V179.3h-1zM450 130.0h1V191.2h-1zM451 128.9h1V184.6h-1zM452 134.1h1V194.1h-1zM453 128.2h1V195.9h-1zM454 124.6h1V196.0h-1zM455 123.7h1V195.3h-1zM456 124.5h1V199.6h-1zM457 125.0h1V196.7h-1zM458 123.6h1V196.1h-1zM459 121.9h1V196.6h-1zM460 125.7h1V198.3h-1zM461 121.3h1V195.9h-1zM462 128.8h1V194.8h-1zM463 138.2h1V193.9h-1zM464 132.7h1V196.7h-1zM465 122.1h1V195.4h-1zM466 123.7h1V197.0h-1zM467 123.4h1V191.7h-1zM468 122.6h1V195.5h-1zM469 124.7h1V197.1h-1zM470 123.7h1V198.5h-1zM471 124.7h1V197.4h-1zM472 123.5h1V196.2h-1zM473 123.9h1V196.2h-1zM474 139.2h1V190.4h-1zM475 133.6h1V181.9h-1zM476 130.6h1V191.4h-1zM477 123.6h1V195.7h-1zM478 123.7h1V197.1h-1zM479 125.2h1V195.8h-1zM480 124.3h1V196.2h-1zM481 123.5h1V196.2h-1zM482 124.7h1V196.5h-1zM483 133.4h1V197.1h-1zM484 128.7h1V197.3h-1zM485 125.2h1V196.6h-1zM486 124.3h1V196.9h-1zM487 123.3h1V199.1h-1zM488 124.1h1V197.3h-1zM489 121.4h1V196.7h-1zM490 124.2h1V199.1h-1zM491 133.1h1V196.4h-1zM492 124.8h1V195.7h-1zM493 123.9h1V195.5h-1zM494 125.7h1V196.5h-1zM495 122.2h1V196.8h-1zM496 123.7h1V197.5h-1zM497 125.5h1V195.5h-1zM498 132.1h1V199.1h-1zM499 124.3h1V197.1h-1zM500 124.3h1V196.1h-1zM501 123.3h1V195.3h-1zM502 128.9h1V195.8h-1zM503 121.5h1V200.0h-1zM504 123.5h1V195.8h-1zM505 124.7h1V193.2h-1zM506 124.4h1V197.3h-1zM507 130.2h1V198.7h-1zM508 124.5h1V198.5h-1zM509 125.0h1V195.4h-1zM510 124.2h1V196.2h-1zM511 122.7h1V195.4h-1zM512 121.4h1V197.4h-1zM513 124.4h1V197.0h-1zM514 124.7h1V198.2h-1zM515 130.3h1V199.9h-1zM516 123.9h1V195.8h-1zM517 123.4h1V192.7h-1zM518 123.6h1V196.3h-1zM519 125.4h1V191.0h-1zM520 125.5h1V195.4h-1zM521 125.1h1V197.3h-1zM522 124.6h1V196.0h-1zM523 125.4h1V196.7h-1zM524 121.1h1V195.5h-1zM525 127.7h1V189.2h-1zM526 124.2h1V197.3h-1zM527 124.8h1V192.6h-1zM528 125.2h1V196.1h-1zM529 124.4h1V195.7h-1zM530 134.6h1V186.5h-1zM531 130.8h1V190.8h-1zM532 132.5h1V188.7h-1zM533 131.4h1V186.5h-1zM534 133.3h1V187.5h-1zM535 129.4h1V188.4h-1zM536 130.8h1V188.3h-1zM537 128.3h1V192.4h-1zM538 123.3h1V197.2h-1zM539 124.0h1V197.1h-1zM540 125.5h1V196.8h-1zM541 130.3h1V198.5h-1zM542 124.0h1V195.7h-1zM543 122.2h1V197.0h-1zM544 131.9h1V196.0h-1zM545 125.5h1V195.8h-1zM546 122.0h1V196.8h-1zM547 123.5h1V195.7h-1zM548 121.1h1V195.6h-1zM549 121.6h1V198.7h-1zM550 124.9h1V197.6h-1zM551 124.2h1V196.0h-1zM552 124.1h1V196.5h-1zM553 125.2h1V197.6h-1zM554 122.5h1V195.5h-1zM555 124.3h1V199.3h-1zM556 121.3h1V197.5h-1zM557 125.4h1V195.7h-1zM558 125.5h1V198.2h-1zM559 125.1h1V196.4h-1zM560 124.7h1V196.1h-1zM561 123.6h1V192.5h-1zM562 124.9h1V197.3h-1zM563 124.9h1V199.7h-1zM564 124.9h1V198.5h-1zM565 125.4h1V196.8h-1zM566 124.5h1V195.8h-1zM567 123.5h1V195.9h-1zM568 125.2h1V199.3h-1zM569 124.3h1V200.0h-1zM570 122.3h1V197.2h-1zM571 125.5h1V196.3h-1zM572 121.4h1V195.4h-1zM573 123.5h1V196.0h-1zM574 124.6h1V197.4h-1zM575 124.0h1V189.4h-1zM576 124.5h1V196.0h-1zM577 133.0h1V195.6h-1zM578 124.5h1V196.1h-1zM579 122.3h1V196.0h-1zM580 125.0h1V195.7h-1zM581 125.4h1V199.0h-1zM582 124.4h1V191.6h-1zM583 123.5h1V198.8h-1zM584 124.3h1V187.5h-1zM585 122.7h1V198.9h-1zM586 125.0h1V188.7h-1zM587 123.0h1V195.5h-1zM588 125.4h1V197.3h-1zM589 126.5h1V195.5h-1zM590 125.5h1V193.5h-1zM591 128.4h1V193.6h-1zM592 138.6h1V186.0h-1zM593 134.5h1V178.8h-1zM594 140.9h1V179.2h-1zM595 151.5h1V169.3h-1zM596 141.5h1V175.2h-1zM597 144.6h1V182.5h-1zM598 144.0h1V178.7h-1zM599 137.8h1V178.8h-1zM600 142.6h1V183.9h-1zM601 137.0h1V178.2h-1zM602 141.5h1V185.9h-1zM603 136.7h1V180.3h-1zM604 141.1h1V184.6h-1zM605 135.8h1V180.8h-1zM606 140.1h1V179.3h-1zM607 136.7h1V186.1h-1zM608 142.0h1V180.0h-1zM609 134.9h1V179.8h-1zM610 140.8h1V185.3h-1zM611 142.3h1V179.6h-1zM612 137.6h1V186.0h-1zM613 142.5h1V178.2h-1zM614 137.0h1V183.3h-1zM615 143.4h1V177.4h-1zM616 137.6h1V183.4h-1zM617 144.4h1V178.0h-1zM618 145.2h1V176.2h-1zM619 138.0h1V176.6h-1zM620 123.4h1V196.9h-1zM621 122.6h1V197.0h-1zM622 137.3h1V180.3h-1z" fill="#1af2aa"/><path id="wf2" d="M11 264.4h1V278.6h-1zM12 264.0h1V279.9h-1zM13 262.8h1V280.5h-1zM14 262.5h1V280.1h-1zM15 262.1h1V280.8h-1zM16 263.0h1V280.6h-1zM17 263.1h1V280.5h-1zM18 262.0h1V281.0h-1zM19 262.1h1V281.0h-1zM20 263.0h1V280.2h-1zM21 262.6h1V280.3h-1zM22 247.4h1V294.6h-1zM23 244.0h1V299.0h-1zM24 261.9h1V280.1h-1zM25 262.2h1V280.3h-1zM26 263.3h1V280.1h-1zM27 263.8h1V280.3h-1zM28 263.1h1V279.1h-1zM29 253.4h1V285.0h-1zM30 267.0h1V276.3h-1zM31 268.4h1V274.6h-1zM32 269.5h1V273.4h-1zM33 269.1h1V273.6h-1zM34 268.6h1V274.6h-1zM35 269.1h1V274.0h-1zM36 268.9h1V274.1h-1zM37 268.4h1V274.9h-1zM38 268.0h1V275.3h-1zM39 267.7h1V276.0h-1zM40 266.4h1V276.0h-1zM41 266.0h1V276.8h-1zM42 265.2h1V277.0h-1zM43 264.4h1V277.9h-1zM44 264.7h1V278.3h-1zM45 263.9h1V278.9h-1zM46 264.1h1V279.8h-1zM47 254.6h1V286.2h-1zM48 265.6h1V277.0h-1zM49 265.7h1V277.4h-1zM50 265.9h1V277.7h-1zM51 265.6h1V277.0h-1zM52 265.9h1V277.9h-1zM53 265.8h1V277.7h-1zM54 265.7h1V277.3h-1zM55 265.8h1V277.4h-1zM56 265.6h1V277.1h-1zM57 265.0h1V278.1h-1zM58 262.5h1V279.7h-1zM59 260.1h1V282.5h-1zM60 256.8h1V285.1h-1zM61 258.1h1V284.6h-1zM62 256.3h1V287.0h-1zM63 255.2h1V291.7h-1zM64 251.8h1V289.0h-1zM65 258.4h1V290.1h-1zM66 247.1h1V286.6h-1zM67 252.2h1V287.7h-1zM68 244.8h1V294.4h-1zM69 248.3h1V295.7h-1zM70 244.4h1V299.6h-1zM71 248.9h1V296.9h-1zM72 243.0h1V299.8h-1zM73 243.1h1V302.5h-1zM74 240.2h1V296.3h-1zM75 241.8h1V296.5h-1zM76 237.9h1V302.2h-1zM77 237.6h1V303.8h-1zM78 235.8h1V307.8h-1zM79 235.1h1V308.7h-1zM80 233.5h1V308.4h-1zM81 233.5h1V311.1h-1zM82 233.1h1V308.7h-1zM83 233.3h1V303.2h-1zM84 231.9h1V309.9h-1zM85 233.6h1V309.2h-1zM86 231.9h1V310.8h-1zM87 235.1h1V310.7h-1zM88 234.8h1V311.1h-1zM89 231.9h1V309.8h-1zM90 233.8h1V307.9h-1zM91 234.0h1V308.1h-1zM92 233.0h1V311.1h-1zM93 233.2h1V304.9h-1zM94 240.7h1V308.7h-1zM95 234.2h1V308.8h-1zM96 231.9h1V308.8h-1zM97 234.8h1V309.6h-1zM98 234.0h1V309.3h-1zM99 234.8h1V311.1h-1zM100 234.0h1V309.5h-1zM101 238.6h1V302.5h-1zM102 234.6h1V310.1h-1zM103 244.5h1V306.6h-1zM104 241.1h1V299.4h-1zM105 241.4h1V304.1h-1zM106 237.7h1V306.1h-1zM107 246.5h1V295.3h-1zM108 243.1h1V295.2h-1zM109 244.0h1V299.7h-1zM110 246.6h1V302.4h-1zM111 248.9h1V293.2h-1zM112 252.5h1V292.3h-1zM113 254.4h1V292.6h-1zM114 252.5h1V287.3h-1zM115 251.2h1V289.9h-1zM116 252.3h1V292.8h-1zM117 252.9h1V296.8h-1zM118 248.1h1V293.4h-1zM119 242.8h1V301.0h-1zM120 246.2h1V297.2h-1zM121 244.5h1V301.9h-1zM122 243.6h1V303.0h-1zM123 243.0h1V298.3h-1zM124 245.1h1V300.9h-1zM125 242.3h1V301.8h-1zM126 237.6h1V301.2h-1zM127 241.2h1V303.2h-1zM128 239.6h1V303.2h-1zM129 239.9h1V306.8h-1zM130 238.4h1V304.2h-1zM131 243.2h1V304.0h-1zM132 237.9h1V305.3h-1zM133 236.9h1V307.0h-1zM134 235.3h1V308.9h-1zM135 233.8h1V308.0h-1zM136 239.6h1V308.1h-1zM137 234.9h1V306.7h-1zM138 236.2h1V307.7h-1zM139 240.0h1V306.4h-1zM140 234.6h1V307.2h-1zM141 235.3h1V308.6h-1zM142 236.0h1V307.5h-1zM143 235.0h1V310.5h-1zM144 235.5h1V307.4h-1zM145 241.7h1V310.0h-1zM146 235.6h1V308.6h-1zM147 236.4h1V307.8h-1zM148 233.3h1V304.0h-1zM149 234.5h1V308.4h-1zM150 236.4h1V307.7h-1zM151 235.0h1V307.1h-1zM152 234.5h1V307.3h-1zM153 235.5h1V309.1h-1zM154 233.6h1V310.0h-1zM155 235.4h1V307.9h-1zM156 235.6h1V307.3h-1zM157 243.9h1V307.2h-1zM158 235.4h1V306.8h-1zM159 233.6h1V306.6h-1zM160 236.2h1V303.5h-1zM161 236.3h1V309.2h-1zM162 233.0h1V309.0h-1zM163 235.7h1V306.4h-1zM164 235.7h1V310.9h-1zM165 239.1h1V306.7h-1zM166 235.9h1V309.1h-1zM167 236.0h1V307.4h-1zM168 236.0h1V302.9h-1zM169 235.2h1V306.5h-1zM170 234.4h1V306.3h-1zM171 233.8h1V309.1h-1zM172 232.7h1V306.8h-1zM173 235.6h1V308.5h-1zM174 236.6h1V307.8h-1zM175 236.5h1V299.4h-1zM176 233.2h1V307.9h-1zM177 236.3h1V308.1h-1zM178 235.4h1V307.2h-1zM179 236.1h1V307.5h-1zM180 239.5h1V307.8h-1zM181 235.8h1V306.7h-1zM182 236.6h1V308.1h-1zM183 236.5h1V299.4h-1zM184 234.6h1V307.4h-1zM185 234.9h1V307.2h-1zM186 233.2h1V306.6h-1zM187 236.4h1V310.3h-1zM188 238.8h1V310.3h-1zM189 236.7h1V298.7h-1zM190 241.9h1V308.2h-1zM191 234.8h1V306.8h-1zM192 233.8h1V306.6h-1zM193 232.1h1V299.1h-1zM194 233.1h1V299.5h-1zM195 235.2h1V308.4h-1zM196 235.3h1V306.6h-1zM197 235.3h1V306.8h-1zM198 235.6h1V306.5h-1zM199 235.5h1V310.1h-1zM200 235.7h1V307.8h-1zM201 240.6h1V307.1h-1zM202 236.5h1V303.5h-1zM203 235.0h1V308.7h-1zM204 234.5h1V307.3h-1zM205 234.5h1V307.5h-1zM206 235.7h1V308.5h-1zM207 244.1h1V303.9h-1zM208 236.0h1V307.8h-1zM209 232.5h1V301.9h-1zM210 234.9h1V307.0h-1zM211 233.4h1V306.5h-1zM212 232.5h1V308.6h-1zM213 234.6h1V306.7h-1zM214 235.6h1V307.6h-1zM215 234.7h1V301.7h-1zM216 234.8h1V303.0h-1zM217 236.7h1V310.1h-1zM218 236.3h1V309.4h-1zM219 235.6h1V308.2h-1zM220 236.6h1V304.4h-1zM221 235.9h1V310.1h-1zM222 233.4h1V299.7h-1zM223 236.1h1V309.9h-1zM224 235.1h1V308.2h-1zM225 239.3h1V308.2h-1zM226 234.7h1V307.0h-1zM227 234.0h1V308.5h-1zM228 235.6h1V308.5h-1zM229 235.3h1V307.5h-1zM230 233.6h1V308.7h-1zM231 235.7h1V307.4h-1zM232 235.6h1V306.7h-1zM233 235.4h1V308.3h-1zM234 234.5h1V306.4h-1zM235 235.4h1V307.0h-1zM236 234.5h1V310.3h-1zM237 235.5h1V308.6h-1zM238 236.2h1V306.7h-1zM239 234.7h1V307.0h-1zM240 234.4h1V307.2h-1zM241 239.3h1V298.6h-1zM242 233.5h1V304.0h-1zM243 234.9h1V307.8h-1zM244 236.7h1V298.7h-1zM245 233.5h1V306.9h-1zM246 236.6h1V298.8h-1zM247 232.2h1V311.0h-1zM248 235.1h1V309.1h-1zM249 236.3h1V299.6h-1zM250 236.6h1V307.6h-1zM251 236.4h1V308.7h-1zM252 239.3h1V309.3h-1zM253 234.5h1V309.4h-1zM254 234.3h1V306.9h-1zM255 234.4h1V308.0h-1zM256 236.6h1V308.1h-1zM257 235.3h1V307.6h-1zM258 235.4h1V306.8h-1zM259 234.5h1V306.7h-1zM260 234.7h1V309.5h-1zM261 238.8h1V307.3h-1zM262 236.4h1V310.7h-1zM263 234.3h1V307.6h-1zM264 236.5h1V307.4h-1zM265 232.8h1V307.5h-1zM266 235.9h1V307.7h-1zM267 234.5h1V308.3h-1zM268 244.4h1V303.8h-1zM269 234.9h1V307.8h-1zM270 244.3h1V307.4h-1zM271 234.6h1V307.6h-1zM272 235.2h1V309.9h-1zM273 234.8h1V310.7h-1zM274 234.3h1V306.8h-1zM275 234.6h1V308.4h-1zM276 238.3h1V305.0h-1zM277 240.8h1V303.4h-1zM278 244.4h1V301.5h-1zM279 247.9h1V297.8h-1zM280 244.9h1V291.4h-1zM281 249.2h1V298.9h-1zM282 235.6h1V306.6h-1zM283 235.8h1V308.4h-1zM284 239.6h1V307.7h-1zM285 233.9h1V306.3h-1zM286 236.3h1V302.2h-1zM287 235.7h1V307.9h-1zM288 236.5h1V308.0h-1zM289 233.1h1V308.7h-1zM290 234.0h1V307.3h-1zM291 234.7h1V307.3h-1zM292 234.6h1V302.1h-1zM293 232.7h1V310.9h-1zM294 235.3h1V309.5h-1zM295 234.6h1V307.0h-1zM296 235.1h1V306.8h-1zM297 243.9h1V310.1h-1zM298 235.8h1V308.5h-1zM299 234.9h1V304.1h-1zM300 236.0h1V299.3h-1zM301 243.4h1V306.6h-1zM302 235.7h1V303.4h-1zM303 233.0h1V308.3h-1zM304 236.6h1V307.2h-1zM305 233.5h1V300.3h-1zM306 236.4h1V301.8h-1zM307 236.1h1V306.8h-1zM308 235.2h1V310.5h-1zM309 235.4h1V307.8h-1zM310 236.6h1V308.4h-1zM311 235.3h1V299.1h-1zM312 236.2h1V308.7h-1zM313 234.3h1V306.7h-1zM314 235.9h1V307.7h-1zM315 232.9h1V307.4h-1zM316 234.6h1V307.5h-1zM317 234.7h1V303.9h-1zM318 235.4h1V308.4h-1zM319 235.4h1V308.3h-1zM320 236.0h1V310.4h-1zM321 235.9h1V307.7h-1zM322 242.7h1V307.2h-1zM323 232.9h1V308.0h-1zM324 233.2h1V302.1h-1zM325 236.4h1V310.0h-1zM326 241.5h1V309.2h-1zM327 234.5h1V307.5h-1zM328 236.5h1V302.6h-1zM329 236.4h1V307.4h-1zM330 236.1h1V306.7h-1zM331 235.5h1V303.2h-1zM332 238.8h1V304.5h-1zM333 239.7h1V299.2h-1zM334 253.9h1V299.0h-1zM335 248.8h1V293.5h-1zM336 255.4h1V293.0h-1zM337 247.6h1V295.2h-1zM338 241.3h1V300.4h-1zM339 232.7h1V300.0h-1zM340 234.4h1V308.0h-1zM341 236.6h1V308.1h-1zM342 236.2h1V311.0h-1zM343 235.5h1V306.7h-1zM344 235.1h1V306.7h-1zM345 232.8h1V306.6h-1zM346 233.8h1V307.2h-1zM347 234.3h1V306.9h-1zM348 236.7h1V300.3h-1zM349 233.9h1V307.1h-1zM350 236.5h1V307.2h-1zM351 235.6h1V307.1h-1zM352 241.2h1V307.1h-1zM353 241.0h1V309.6h-1zM354 235.4h1V307.0h-1zM355 233.9h1V306.8h-1zM356 236.1h1V307.7h-1zM357 234.9h1V307.3h-1zM358 236.5h1V307.5h-1zM359 232.1h1V307.8h-1zM360 236.4h1V306.7h-1zM361 234.3h1V310.0h-1zM362 236.1h1V307.3h-1zM363 233.1h1V310.4h-1zM364 234.5h1V310.4h-1zM365 235.6h1V307.0h-1zM366 232.7h1V310.9h-1zM367 232.1h1V304.0h-1zM368 235.4h1V307.5h-1zM369 236.5h1V307.5h-1zM370 236.7h1V310.4h-1zM371 235.7h1V307.6h-1zM372 235.6h1V306.4h-1zM373 234.9h1V301.7h-1zM374 240.6h1V308.1h-1zM375 235.6h1V302.5h-1zM376 233.5h1V307.8h-1zM377 239.6h1V309.4h-1zM378 236.1h1V306.4h-1zM379 235.7h1V308.0h-1zM380 235.8h1V303.2h-1zM381 240.9h1V295.9h-1zM382 237.0h1V305.4h-1zM383 238.8h1V296.9h-1zM384 244.3h1V299.2h-1zM385 240.1h1V298.1h-1zM386 238.6h1V300.6h-1zM387 241.1h1V295.8h-1zM388 248.8h1V293.9h-1zM389 239.1h1V292.7h-1zM390 241.6h1V291.2h-1zM391 237.9h1V292.8h-1zM392 241.5h1V293.6h-1zM393 245.1h1V287.4h-1zM394 240.9h1V288.4h-1zM395 255.3h1V281.0h-1zM396 251.6h1V282.8h-1zM397 264.4h1V282.4h-1zM398 255.8h1V279.6h-1zM399 264.0h1V278.3h-1zM400 266.3h1V281.8h-1zM401 266.0h1V277.1h-1zM402 266.1h1V278.3h-1zM403 258.5h1V285.5h-1zM404 265.7h1V277.2h-1zM405 265.2h1V277.7h-1zM406 260.9h1V281.6h-1zM407 264.8h1V277.2h-1zM408 266.2h1V277.2h-1zM409 260.1h1V283.3h-1zM410 265.8h1V277.1h-1zM411 265.5h1V278.1h-1zM412 258.0h1V282.0h-1zM413 266.2h1V278.2h-1zM414 265.5h1V277.3h-1zM415 257.7h1V283.1h-1zM416 265.8h1V276.5h-1zM417 265.4h1V277.5h-1zM418 259.5h1V284.7h-1zM419 266.1h1V278.5h-1zM420 266.3h1V278.2h-1zM421 257.9h1V281.9h-1zM422 265.4h1V278.2h-1zM423 264.8h1V278.3h-1zM424 266.4h1V282.0h-1zM425 265.6h1V278.0h-1zM426 264.5h1V277.9h-1zM427 265.4h1V285.5h-1zM428 261.1h1V278.2h-1zM429 265.9h1V277.8h-1zM430 266.4h1V284.7h-1zM431 259.2h1V278.4h-1zM432 266.1h1V277.9h-1zM433 265.0h1V284.9h-1zM434 261.4h1V276.9h-1zM435 265.4h1V278.4h-1zM436 266.1h1V282.1h-1zM437 265.6h1V277.5h-1zM438 260.9h1V278.0h-1zM439 263.9h1V278.1h-1zM440 264.0h1V287.5h-1zM441 256.7h1V280.5h-1zM442 261.1h1V281.1h-1zM443 260.6h1V283.3h-1zM444 254.7h1V284.5h-1zM445 257.6h1V293.6h-1zM446 255.6h1V291.9h-1zM447 251.7h1V291.7h-1zM448 253.8h1V293.6h-1zM449 251.1h1V290.3h-1zM450 241.0h1V302.2h-1zM451 239.9h1V295.6h-1zM452 245.1h1V305.1h-1zM453 239.2h1V306.9h-1zM454 235.6h1V307.0h-1zM455 234.7h1V306.3h-1zM456 235.5h1V310.6h-1zM457 236.0h1V307.7h-1zM458 234.6h1V307.1h-1zM459 232.9h1V307.6h-1zM460 236.7h1V309.3h-1zM461 232.3h1V306.9h-1zM462 239.8h1V305.8h-1zM463 249.2h1V304.9h-1zM464 243.7h1V307.7h-1zM465 233.1h1V306.4h-1zM466 234.7h1V308.0h-1zM467 234.4h1V302.7h-1zM468 233.6h1V306.5h-1zM469 235.7h1V308.1h-1zM470 234.7h1V309.5h-1zM471 235.7h1V308.4h-1zM472 234.5h1V307.2h-1zM473 234.9h1V307.2h-1zM474 250.2h1V301.4h-1zM475 244.6h1V292.9h-1zM476 241.6h1V302.4h-1zM477 234.6h1V306.7h-1zM478 234.7h1V308.1h-1zM479 236.2h1V306.8h-1zM480 235.3h1V307.2h-1zM481 234.5h1V307.2h-1zM482 235.7h1V307.5h-1zM483 244.4h1V308.1h-1zM484 239.7h1V308.3h-1zM485 236.2h1V307.6h-1zM486 235.3h1V307.9h-1zM487 234.3h1V310.1h-1zM488 235.1h1V308.3h-1zM489 232.4h1V307.7h-1zM490 235.2h1V310.1h-1zM491 244.1h1V307.4h-1zM492 235.8h1V306.7h-1zM493 234.9h1V306.5h-1zM494 236.7h1V307.5h-1zM495 233.2h1V307.8h-1zM496 234.7h1V308.5h-1zM497 236.5h1V306.5h-1zM498 243.1h1V310.1h-1zM499 235.3h1V308.1h-1zM500 235.3h1V307.1h-1zM501 234.3h1V306.3h-1zM502 239.9h1V306.8h-1zM503 232.5h1V311.0h-1zM504 234.5h1V306.8h-1zM505 235.7h1V304.2h-1zM506 235.4h1V308.3h-1zM507 241.2h1V309.7h-1zM508 235.5h1V309.5h-1zM509 236.0h1V306.4h-1zM510 235.2h1V307.2h-1zM511 233.7h1V306.4h-1zM512 232.4h1V308.4h-1zM513 235.4h1V308.0h-1zM514 235.7h1V309.2h-1zM515 241.3h1V310.9h-1zM516 234.9h1V306.8h-1zM517 234.4h1V303.7h-1zM518 234.6h1V307.3h-1zM519 236.4h1V302.0h-1zM520 236.5h1V306.4h-1zM521 236.1h1V308.3h-1zM522 235.6h1V307.0h-1zM523 236.4h1V307.7h-1zM524 232.1h1V306.5h-1zM525 238.7h1V300.2h-1zM526 235.2h1V308.3h-1zM527 235.8h1V303.6h-1zM528 236.2h1V307.1h-1zM529 235.4h1V306.7h-1zM530 245.6h1V297.5h-1zM531 241.8h1V301.8h-1zM532 243.5h1V299.7h-1zM533 242.4h1V297.5h-1zM534 244.3h1V298.5h-1zM535 240.4h1V299.4h-1zM536 241.8h1V299.3h-1zM537 239.3h1V303.4h-1zM538 234.3h1V308.2h-1zM539 235.0h1V308.1h-1zM540 236.5h1V307.8h-1zM541 241.3h1V309.5h-1zM542 235.0h1V306.7h-1zM543 233.2h1V308.0h-1zM544 242.9h1V307.0h-1zM545 236.5h1V306.8h-1zM546 233.0h1V307.8h-1zM547 234.5h1V306.7h-1zM548 232.1h1V306.6h-1zM549 232.6h1V309.7h-1zM550 235.9h1V308.6h-1zM551 235.2h1V307.0h-1zM552 235.1h1V307.5h-1zM553 236.2h1V308.6h-1zM554 233.5h1V306.5h-1zM555 235.3h1V310.3h-1zM556 232.3h1V308.5h-1zM557 236.4h1V306.7h-1zM558 236.5h1V309.2h-1zM559 236.1h1V307.4h-1zM560 235.7h1V307.1h-1zM561 234.6h1V303.5h-1zM562 235.9h1V308.3h-1zM563 235.9h1V310.7h-1zM564 235.9h1V309.5h-1zM565 236.4h1V307.8h-1zM566 235.5h1V306.8h-1zM567 234.5h1V306.9h-1zM568 236.2h1V310.3h-1zM569 235.3h1V311.0h-1zM570 233.3h1V308.2h-1zM571 236.5h1V307.3h-1zM572 232.4h1V306.4h-1zM573 234.5h1V307.0h-1zM574 235.6h1V308.4h-1zM575 235.0h1V300.4h-1zM576 235.5h1V307.0h-1zM577 244.0h1V306.6h-1zM578 235.5h1V307.1h-1zM579 233.3h1V307.0h-1zM580 236.0h1V306.7h-1zM581 236.4h1V310.0h-1zM582 235.4h1V302.6h-1zM583 234.5h1V309.8h-1zM584 235.3h1V298.5h-1zM585 233.7h1V309.9h-1zM586 236.0h1V299.7h-1zM587 234.0h1V306.5h-1zM588 236.4h1V308.3h-1zM589 237.5h1V306.5h-1zM590 236.5h1V304.5h-1zM591 239.4h1V304.6h-1zM592 249.6h1V297.0h-1zM593 245.5h1V289.8h-1zM594 251.9h1V290.2h-1zM595 262.5h1V280.3h-1zM596 252.5h1V286.2h-1zM597 255.6h1V293.5h-1zM598 255.0h1V289.7h-1zM599 248.8h1V289.8h-1zM600 253.6h1V294.9h-1zM601 248.0h1V289.2h-1zM602 252.5h1V296.9h-1zM603 247.7h1V291.3h-1zM604 252.1h1V295.6h-1zM605 246.8h1V291.8h-1zM606 251.1h1V290.3h-1zM607 247.7h1V297.1h-1zM608 253.0h1V291.0h-1zM609 245.9h1V290.8h-1zM610 251.8h1V296.3h-1zM611 253.3h1V290.6h-1zM612 248.6h1V297.0h-1zM613 253.5h1V289.2h-1zM614 248.0h1V294.3h-1zM615 254.4h1V288.4h-1zM616 248.6h1V294.4h-1zM617 255.4h1V289.0h-1zM618 256.2h1V287.2h-1zM619 249.0h1V287.6h-1zM620 234.4h1V307.9h-1zM621 233.6h1V308.0h-1zM622 248.3h1V291.3h-1z" fill="#1af2aa"/><clipPath id="wfc"><use href="#wf1"/><use href="#wf2"/></clipPath><g clip-path="url(#wfc)" shape-rendering="auto"><text x="241.7" y="274.4" font-family="Liberation Serif, serif" font-size="30" fill="#22b58a" fill-opacity=".9" stroke="#22b58a" stroke-width=".5" stroke-opacity=".6" textLength="189">programy.net.pl</text><text x="240.5" y="273.2" font-family="Liberation Serif, serif" font-size="30" fill="#80e0c2" fill-opacity=".8" stroke="#80e0c2" stroke-width=".4" stroke-opacity=".6" textLength="189">programy.net.pl</text></g></svg>
<div style="position:absolute;left:623px;top:105px;width:30px;height:221px;background:#e3e3e3"></div>
<div id="hscroll"></div>
<svg style="position:absolute;left:15px;top:331px;overflow:visible;" width="4" height="7" viewBox="0 0 4 7"><path d="M4 0v7l-4-3.5z" fill="#929292"/></svg>
<svg style="position:absolute;left:645px;top:331px;overflow:visible;" width="4" height="7" viewBox="0 0 4 7"><path d="M0 0v7l4-3.5z" fill="#929292"/></svg>
<div id="dd"><div id="ddgut"></div><span style="position:absolute;left:120.5px;top:196.1px;font:30px/1 'Liberation Serif',serif;color:rgba(140,140,146,.55);text-shadow:1px 1px 0 rgba(255,255,255,.8);white-space:nowrap">programy.net.pl</span></div>
<div style="position:absolute;left:120.5px;top:51px;width:59.5px;height:2px;background:#fff"></div>
<div style="position:absolute;left:153px;top:120.5px;width:107px;height:1px;background:#c8c8c8"></div>
<svg style="position:absolute;left:128px;top:57.6px;overflow:visible;" width="8" height="11" viewBox="0 0 8 11"><defs><linearGradient id="pgb" x1="0" y1="0" x2="1" y2="0"><stop offset="0" stop-color="#2f8a2c"/><stop offset="1" stop-color="#74c456"/></linearGradient></defs><path d="M.3 .3l6.2 5l-6.2 5z" fill="url(#pgb)" stroke="#2f8a2c" stroke-width=".6" stroke-linejoin="round"/></svg>
<svg style="position:absolute;left:127px;top:81.3px;overflow:visible;" width="8" height="9" viewBox="0 0 8 9"><rect x=".4" y=".4" width="2" height="8" fill="#8fb0ec" stroke="#3f68c4" stroke-width=".8"/><rect x="4.5" y=".4" width="2" height="8" fill="#8fb0ec" stroke="#3f68c4" stroke-width=".8"/></svg>
<svg style="position:absolute;left:126.2px;top:103.9px;overflow:visible;" width="9" height="9" viewBox="0 0 9 9"><defs><linearGradient id="sgb" x1="0" y1="0" x2="1" y2="1"><stop offset="0" stop-color="#dde7fa"/><stop offset="1" stop-color="#3a68cc"/></linearGradient></defs><rect x=".5" y=".5" width="7.6" height="7.8" fill="url(#sgb)" stroke="#4a70c0" stroke-width="1"/></svg>
<svg style="position:absolute;left:123.2px;top:124.2px;overflow:visible;" width="16" height="15" viewBox="0 0 16 15"><rect x="0" y="7.0" width="1" height="1" fill="#3f8fdc"/><rect x="1" y="7.0" width="1" height="1" fill="#3f8fdc"/><rect x="2" y="7.0" width="1" height="1" fill="#3f8fdc"/><rect x="3" y="7.0" width="1" height="1" fill="#3f8fdc"/><rect x="4" y="6.0" width="1" height="3" fill="#3f8fdc"/><rect x="5" y="7.0" width="1" height="1" fill="#3f8fdc"/><rect x="6" y="5.0" width="1" height="5" fill="#3f8fdc"/><rect x="7" y="7.0" width="1" height="1" fill="#3f8fdc"/><rect x="8" y="4.0" width="1" height="7" fill="#3f8fdc"/><rect x="9" y="7.0" width="1" height="1" fill="#3f8fdc"/><rect x="10" y="2.5" width="1" height="10" fill="#3f8fdc"/><rect x="11" y="7.0" width="1" height="1" fill="#3f8fdc"/><rect x="12" y="1.5" width="1" height="12" fill="#3f8fdc"/><rect x="13" y="7.0" width="1" height="1" fill="#3f8fdc"/><rect x="14" y="0.0" width="1" height="15" fill="#3f8fdc"/><rect x="15" y="7.0" width="1" height="1" fill="#3f8fdc"/></svg>
<svg style="position:absolute;left:123.2px;top:146.2px;overflow:visible;" width="16" height="15" viewBox="0 0 16 15"><rect x="0" y="7.0" width="1" height="1" fill="#3f8fdc"/><rect x="1" y="0.0" width="1" height="15" fill="#3f8fdc"/><rect x="2" y="7.0" width="1" height="1" fill="#3f8fdc"/><rect x="3" y="1.5" width="1" height="12" fill="#3f8fdc"/><rect x="4" y="7.0" width="1" height="1" fill="#3f8fdc"/><rect x="5" y="2.5" width="1" height="10" fill="#3f8fdc"/><rect x="6" y="7.0" width="1" height="1" fill="#3f8fdc"/><rect x="7" y="4.0" width="1" height="7" fill="#3f8fdc"/><rect x="8" y="7.0" width="1" height="1" fill="#3f8fdc"/><rect x="9" y="5.0" width="1" height="5" fill="#3f8fdc"/><rect x="10" y="7.0" width="1" height="1" fill="#3f8fdc"/><rect x="11" y="6.0" width="1" height="3" fill="#3f8fdc"/><rect x="12" y="7.0" width="1" height="1" fill="#3f8fdc"/><rect x="13" y="7.0" width="1" height="1" fill="#3f8fdc"/><rect x="14" y="7.0" width="1" height="1" fill="#3f8fdc"/><rect x="15" y="7.0" width="1" height="1" fill="#3f8fdc"/></svg>
<svg style="position:absolute;left:123.2px;top:168.3px;overflow:visible;" width="16" height="15" viewBox="0 0 16 15"><rect x="6.2" y="0.5" width="1.3" height="14.5" fill="#3f8fdc"/><rect x="9.5" y="0.5" width="1.3" height="14.5" fill="#3f8fdc"/><path d="M0.3 7.7l3.4-3v2.4h2.2v1.2h-2.2v2.4z" fill="#3f8fdc"/><path d="M16.7 7.7l-3.4-3v2.4h-2.2v1.2h2.2v2.4z" fill="#3f8fdc"/></svg>
<svg style="position:absolute;left:123px;top:189.8px;overflow:visible;" width="16" height="15" viewBox="0 0 16 15"><rect x="0" y="2.7" width="16" height="1.1" fill="#e0242c"/><rect x="0" y="11.9" width="16" height="1.1" fill="#e0242c"/><rect x="0" y="5.99" width="1.02" height="3.72" fill="#3f8fdc"/><rect x="1" y="4.81" width="1.02" height="6.08" fill="#3f8fdc"/><rect x="2" y="3.87" width="1.02" height="7.96" fill="#3f8fdc"/><rect x="3" y="5.05" width="1.02" height="5.61" fill="#3f8fdc"/><rect x="4" y="6.22" width="1.02" height="3.25" fill="#3f8fdc"/><rect x="5" y="6.70" width="1.02" height="2.31" fill="#3f8fdc"/><rect x="6" y="5.52" width="1.02" height="4.66" fill="#3f8fdc"/><rect x="7" y="4.34" width="1.02" height="7.02" fill="#3f8fdc"/><rect x="8" y="4.34" width="1.02" height="7.02" fill="#3f8fdc"/><rect x="9" y="5.52" width="1.02" height="4.66" fill="#3f8fdc"/><rect x="10" y="6.70" width="1.02" height="2.31" fill="#3f8fdc"/><rect x="11" y="6.22" width="1.02" height="3.25" fill="#3f8fdc"/><rect x="12" y="5.05" width="1.02" height="5.61" fill="#3f8fdc"/><rect x="13" y="3.87" width="1.02" height="7.96" fill="#3f8fdc"/><rect x="14" y="4.81" width="1.02" height="6.08" fill="#3f8fdc"/><rect x="15" y="5.99" width="1.02" height="3.72" fill="#3f8fdc"/></svg>
<svg style="position:absolute;left:123.2px;top:212.3px;overflow:visible;" width="16" height="16" viewBox="0 0 16 16"><rect x="0" y="10.4" width="1" height="1" fill="#3f8fdc"/><rect x="1" y="9.9" width="1" height="2" fill="#3f8fdc"/><rect x="2" y="8.4" width="1" height="5" fill="#3f8fdc"/><rect x="3" y="9.4" width="1" height="3" fill="#3f8fdc"/><rect x="4" y="7.4" width="1" height="7" fill="#3f8fdc"/><rect x="5" y="8.9" width="1" height="4" fill="#3f8fdc"/><rect x="6" y="6.9" width="1" height="8" fill="#3f8fdc"/><rect x="7" y="9.9" width="1" height="2" fill="#3f8fdc"/><rect x="8" y="7.9" width="1" height="6" fill="#3f8fdc"/><rect x="9" y="6.9" width="1" height="8" fill="#3f8fdc"/><rect x="10" y="9.4" width="1" height="3" fill="#3f8fdc"/><rect x="11" y="7.4" width="1" height="7" fill="#3f8fdc"/><rect x="12" y="9.4" width="1" height="3" fill="#3f8fdc"/><rect x="13" y="8.4" width="1" height="5" fill="#3f8fdc"/><rect x="14" y="9.9" width="1" height="2" fill="#3f8fdc"/><rect x="15" y="10.4" width="1" height="1" fill="#3f8fdc"/><path d="M6.6 1.2h6.7v4h-2.4" fill="none" stroke="#e0242c" stroke-width="1.05"/><path d="M11 3.2l-2.7 2l2.7 2z" fill="#e0242c"/><rect x="2.8" y=".7" width="1" height="1" fill="#e0242c"/><rect x="4.7" y=".7" width="1" height="1" fill="#e0242c"/></svg>
<svg style="position:absolute;left:123.2px;top:235.4px;overflow:visible;" width="16" height="14" viewBox="0 0 16 14"><rect x="0" y="1" width="15.6" height="2.6" fill="#3f8fdc"/><rect x="0" y="10.3" width="15.6" height="2.6" fill="#3f8fdc"/><rect x="0" y="3.5" width="1" height="3" fill="#3f8fdc"/><rect x="1" y="3.5" width="1" height="3" fill="#3f8fdc"/><rect x="3" y="3.5" width="1" height="2" fill="#3f8fdc"/><rect x="4" y="3.5" width="1" height="2" fill="#3f8fdc"/><rect x="6" y="3.5" width="1" height="3" fill="#3f8fdc"/><rect x="7" y="3.5" width="1" height="3" fill="#3f8fdc"/><rect x="9" y="3.5" width="1" height="3" fill="#3f8fdc"/><rect x="10" y="3.5" width="1" height="2" fill="#3f8fdc"/><rect x="12" y="3.5" width="1" height="3" fill="#3f8fdc"/><rect x="13" y="3.5" width="1" height="3" fill="#3f8fdc"/><rect x="15" y="3.5" width="0.6" height="2" fill="#3f8fdc"/><rect x="0" y="8.4" width="1" height="2" fill="#3f8fdc"/><rect x="2" y="7.4" width="1" height="3" fill="#3f8fdc"/><rect x="3" y="7.4" width="1" height="3" fill="#3f8fdc"/><rect x="5" y="8.4" width="1" height="2" fill="#3f8fdc"/><rect x="6" y="7.4" width="1" height="3" fill="#3f8fdc"/><rect x="8" y="7.4" width="1" height="3" fill="#3f8fdc"/><rect x="9" y="7.4" width="1" height="3" fill="#3f8fdc"/><rect x="11" y="8.4" width="1" height="2" fill="#3f8fdc"/><rect x="12" y="8.4" width="1" height="2" fill="#3f8fdc"/><rect x="14" y="7.4" width="1" height="3" fill="#3f8fdc"/><rect x="15" y="7.4" width="0.6" height="3" fill="#3f8fdc"/></svg>
<svg style="position:absolute;left:123.2px;top:256px;overflow:visible;" width="16" height="16" viewBox="0 0 16 16"><rect x="0" y="7.4" width="1" height="2" fill="#3f8fdc"/><rect x="1" y="5.4" width="1" height="6" fill="#3f8fdc"/><rect x="2" y="6.9" width="1" height="3" fill="#3f8fdc"/><rect x="3" y="3.4" width="1" height="10" fill="#3f8fdc"/><rect x="4" y="5.9" width="1" height="5" fill="#3f8fdc"/><rect x="5" y="2.4" width="1" height="12" fill="#3f8fdc"/><rect x="6" y="6.4" width="1" height="4" fill="#3f8fdc"/><rect x="7" y="2.9" width="1" height="11" fill="#3f8fdc"/><rect x="8" y="5.9" width="1" height="5" fill="#3f8fdc"/><rect x="9" y="3.9" width="1" height="9" fill="#3f8fdc"/><path d="M12.7 13.9l2.3-3.6h-4.6z" fill="#e0242c"/><rect x="12.1" y="6.8" width="1.2" height="4" fill="#e0242c"/><rect x="12.1" y="1.8" width="1.2" height="1.3" fill="#e0242c"/><rect x="12.1" y="4.2" width="1.2" height="1.3" fill="#e0242c"/></svg>
<svg style="position:absolute;left:123.2px;top:279.2px;overflow:visible;" width="16" height="16" viewBox="0 0 16 16"><rect x="0" y="7.4" width="1" height="2" fill="#3f8fdc"/><rect x="1" y="5.4" width="1" height="6" fill="#3f8fdc"/><rect x="2" y="6.9" width="1" height="3" fill="#3f8fdc"/><rect x="3" y="3.4" width="1" height="10" fill="#3f8fdc"/><rect x="4" y="5.9" width="1" height="5" fill="#3f8fdc"/><rect x="5" y="2.4" width="1" height="12" fill="#3f8fdc"/><rect x="6" y="6.4" width="1" height="4" fill="#3f8fdc"/><rect x="7" y="2.9" width="1" height="11" fill="#3f8fdc"/><rect x="8" y="5.9" width="1" height="5" fill="#3f8fdc"/><rect x="9" y="3.9" width="1" height="9" fill="#3f8fdc"/><path d="M12.7 1.3l2.3 3.6h-4.6z" fill="#e0242c"/><rect x="12.1" y="4.5" width="1.2" height="4" fill="#e0242c"/><rect x="12.1" y="9.6" width="1.2" height="1.3" fill="#e0242c"/><rect x="12.1" y="12" width="1.2" height="1.3" fill="#e0242c"/></svg>
<div id="tabbar"></div><div id="panel"></div><div id="tab"></div>
<div class="gb" style="left:21px;top:381px;width:241px;height:106px"></div>
<div class="gb" style="left:268px;top:381px;width:302px;height:43px"></div>
<div class="gb" style="left:268px;top:437px;width:302px;height:50px"></div>
<div class="gb" style="left:577px;top:381px;width:65px;height:106px"></div>
<div style="position:absolute;left:31px;top:375px;width:49px;height:14px;background:#fff"></div>
<div style="position:absolute;left:278px;top:375px;width:38px;height:14px;background:#fff"></div>
<div style="position:absolute;left:278px;top:431px;width:36px;height:14px;background:#fff"></div>
<div style="position:absolute;left:585px;top:375px;width:39px;height:14px;background:#fff"></div>
<div class="inp" style="left:71px;top:401px"></div><div class="inp" style="left:71px;top:435px"></div>
<div class="btn" style="left:166px;top:400px"></div><div class="btn" style="left:166px;top:434px"></div>
<div id="chk"></div>
<div style="position:absolute;left:284px;top:453px;width:270px;height:24px;background:#000"></div>
<svg style="position:absolute;left:0;top:0" width="662" height="528"><rect x="609.3" y="399.5" width="2.4" height="72" rx="1" fill="#e4e4e4" stroke="#a6a6a6" stroke-width=".8"/><rect x="596.3" y="403.60" width="3.6" height="1" fill="#cbcbcb"/><rect x="621.3" y="403.60" width="3.6" height="1" fill="#cbcbcb"/><rect x="596.3" y="407.16" width="3.6" height="1" fill="#cbcbcb"/><rect x="621.3" y="407.16" width="3.6" height="1" fill="#cbcbcb"/><rect x="596.3" y="410.72" width="3.6" height="1" fill="#cbcbcb"/><rect x="621.3" y="410.72" width="3.6" height="1" fill="#cbcbcb"/><rect x="596.3" y="414.28" width="3.6" height="1" fill="#cbcbcb"/><rect x="621.3" y="414.28" width="3.6" height="1" fill="#cbcbcb"/><rect x="596.3" y="417.84" width="3.6" height="1" fill="#cbcbcb"/><rect x="621.3" y="417.84" width="3.6" height="1" fill="#cbcbcb"/><rect x="596.3" y="421.40" width="3.6" height="1" fill="#cbcbcb"/><rect x="621.3" y="421.40" width="3.6" height="1" fill="#cbcbcb"/><rect x="596.3" y="424.96" width="3.6" height="1" fill="#cbcbcb"/><rect x="621.3" y="424.96" width="3.6" height="1" fill="#cbcbcb"/><rect x="596.3" y="428.52" width="3.6" height="1" fill="#cbcbcb"/><rect x="621.3" y="428.52" width="3.6" height="1" fill="#cbcbcb"/><rect x="596.3" y="432.08" width="3.6" height="1" fill="#cbcbcb"/><rect x="621.3" y="432.08" width="3.6" height="1" fill="#cbcbcb"/><rect x="596.3" y="435.64" width="3.6" height="1" fill="#cbcbcb"/><rect x="621.3" y="435.64" width="3.6" height="1" fill="#cbcbcb"/><rect x="596.3" y="439.20" width="3.6" height="1" fill="#cbcbcb"/><rect x="621.3" y="439.20" width="3.6" height="1" fill="#cbcbcb"/><rect x="596.3" y="442.76" width="3.6" height="1" fill="#cbcbcb"/><rect x="621.3" y="442.76" width="3.6" height="1" fill="#cbcbcb"/><rect x="596.3" y="446.32" width="3.6" height="1" fill="#cbcbcb"/><rect x="621.3" y="446.32" width="3.6" height="1" fill="#cbcbcb"/><rect x="596.3" y="449.88" width="3.6" height="1" fill="#cbcbcb"/><rect x="621.3" y="449.88" width="3.6" height="1" fill="#cbcbcb"/><rect x="596.3" y="453.44" width="3.6" height="1" fill="#cbcbcb"/><rect x="621.3" y="453.44" width="3.6" height="1" fill="#cbcbcb"/><rect x="596.3" y="457.00" width="3.6" height="1" fill="#cbcbcb"/><rect x="621.3" y="457.00" width="3.6" height="1" fill="#cbcbcb"/><rect x="596.3" y="460.56" width="3.6" height="1" fill="#cbcbcb"/><rect x="621.3" y="460.56" width="3.6" height="1" fill="#cbcbcb"/><rect x="596.3" y="464.12" width="3.6" height="1" fill="#cbcbcb"/><rect x="621.3" y="464.12" width="3.6" height="1" fill="#cbcbcb"/><rect x="596.3" y="467.68" width="3.6" height="1" fill="#cbcbcb"/><rect x="621.3" y="467.68" width="3.6" height="1" fill="#cbcbcb"/><defs><linearGradient id="th" x1="0" y1="0" x2="0" y2="1"><stop offset="0" stop-color="#f6f6f6"/><stop offset=".5" stop-color="#e0e0e0"/><stop offset="1" stop-color="#cacaca"/></linearGradient></defs><rect x="601.5" y="412.2" width="18" height="9.2" rx="2" fill="url(#th)" stroke="#8c8c8c" stroke-width="1"/></svg>
<div id="status"></div>
<div style="position:absolute;left:158px;top:502px;width:1px;height:16px;background:#c2c2c2"></div><div style="position:absolute;left:159px;top:502px;width:1px;height:16px;background:#fcfcfc"></div>
<div style="position:absolute;left:308px;top:502px;width:1px;height:16px;background:#c2c2c2"></div><div style="position:absolute;left:309px;top:502px;width:1px;height:16px;background:#fcfcfc"></div>
<div style="position:absolute;left:458px;top:502px;width:1px;height:16px;background:#c2c2c2"></div><div style="position:absolute;left:459px;top:502px;width:1px;height:16px;background:#fcfcfc"></div>
<div style="position:absolute;left:23px;top:527px;width:22px;height:1px;background:repeating-linear-gradient(90deg,#3a3030 0,#3a3030 3px,#b0a8a8 3px,#b0a8a8 4.5px)"></div>
<span class="t" id="t0" style="left:30.42727272727273px;top:8.04px;font-size:12px;color:#0a0a0a;letter-spacing:-0.052px;">Lost </span>
<span class="t" id="t1" style="left:55.527272727272724px;top:8.04px;font-size:12px;color:#0a0a0a;letter-spacing:-0.235px;">Frequencies </span>
<span class="t" id="t2" style="left:121.42727272727272px;top:8.04px;font-size:12px;color:#0a0a0a;letter-spacing:0.261px;">feat. </span>
<span class="t" id="t3" style="left:149.02727272727273px;top:8.04px;font-size:12px;color:#0a0a0a;letter-spacing:-0.335px;">Janieck </span>
<span class="t" id="t4" style="left:189.72727272727272px;top:8.04px;font-size:12px;color:#0a0a0a;letter-spacing:0.513px;">Devy </span>
<span class="t" id="t5" style="left:222.3272727272727px;top:8.04px;font-size:12px;color:#0a0a0a;letter-spacing:0.405px;">- </span>
<span class="t" id="t6" style="left:229.8272727272727px;top:8.04px;font-size:12px;color:#0a0a0a;letter-spacing:-0.195px;">Reality </span>
<span class="t" id="t7" style="left:267.6272727272727px;top:8.04px;font-size:12px;color:#0a0a0a;letter-spacing:-0.014px;">(Official </span>
<span class="t" id="t8" style="left:310.6272727272727px;top:8.04px;font-size:12px;color:#0a0a0a;letter-spacing:0.440px;">Video </span>
<span class="t" id="t9" style="left:346.42727272727274px;top:8.04px;font-size:12px;color:#0a0a0a;letter-spacing:-0.186px;">HD).mp3 </span>
<span class="t" id="t10" style="left:395.6272727272727px;top:8.04px;font-size:12px;color:#0a0a0a;letter-spacing:0.905px;">- </span>
<span class="t" id="t11" style="left:404.1272727272727px;top:8.04px;font-size:12px;color:#0a0a0a;letter-spacing:0.278px;">Wave </span>
<span class="t" id="t12" style="left:438.42727272727274px;top:8.04px;font-size:12px;color:#0a0a0a;letter-spacing:-0.084px;">Editor</span>
<span class="t" id="t13" style="left:24.4px;top:35.89px;font-size:11px;color:#000;letter-spacing:-0.384px;">File</span>
<span class="t" id="t14" style="left:54.800000000000004px;top:35.89px;font-size:11px;color:#000;letter-spacing:-0.414px;">View</span>
<span class="t" id="t15" style="left:90.7px;top:35.89px;font-size:11px;color:#000;letter-spacing:-0.092px;">Edit</span>
<span class="t" id="t16" style="left:190.2px;top:35.89px;font-size:11px;color:#000;letter-spacing:-0.217px;">Tools</span>
<span class="t" id="t17" style="left:229.2px;top:35.89px;font-size:11px;color:#000;letter-spacing:-0.431px;">Help</span>
<span class="t" id="t18" style="left:123.0px;top:35.89px;font-size:11px;color:#000;letter-spacing:-0.071px;">Operations</span>
<span class="t" id="t26" style="left:626.3454545454546px;top:118.28px;font-size:9px;color:#000;letter-spacing:-0.180px;">0db</span>
<span class="t" id="t27" style="left:626.1454545454545px;top:158.28px;font-size:9px;color:#000;letter-spacing:0.012px;">-90db</span>
<span class="t" id="t28" style="left:626.3454545454546px;top:198.28px;font-size:9px;color:#000;letter-spacing:-0.180px;">0db</span>
<span class="t" id="t29" style="left:626.3454545454546px;top:229.28px;font-size:9px;color:#000;letter-spacing:-0.180px;">0db</span>
<span class="t" id="t30" style="left:626.1454545454545px;top:269.28px;font-size:9px;color:#000;letter-spacing:0.012px;">-90db</span>
<span class="t" id="t31" style="left:626.3454545454546px;top:309.28px;font-size:9px;color:#000;letter-spacing:-0.180px;">0db</span>
<span class="t" id="t32" style="left:149.79999999999998px;top:58.69px;font-size:11px;color:#000;letter-spacing:-0.302px;">Play</span>
<span class="t" id="t33" style="left:207.0px;top:58.69px;font-size:11px;color:#000;letter-spacing:0.171px;">Ctrl+P</span>
<span class="t" id="t34" style="left:149.79999999999998px;top:80.69px;font-size:11px;color:#000;letter-spacing:-0.441px;">Pause</span>
<span class="t" id="t35" style="left:149.79999999999998px;top:102.69px;font-size:11px;color:#000;letter-spacing:-0.110px;">Stop</span>
<span class="t" id="t36" style="left:207.0px;top:102.69px;font-size:11px;color:#000;letter-spacing:0.192px;">Ctrl+T</span>
<span class="t" id="t37" style="left:149.79999999999998px;top:127.69px;font-size:11px;color:#000;letter-spacing:-0.045px;">Fade In</span>
<span class="t" id="t38" style="left:149.79999999999998px;top:149.69px;font-size:11px;color:#000;letter-spacing:-0.070px;">Fade Out</span>
<span class="t" id="t39" style="left:149.79999999999998px;top:171.69px;font-size:11px;color:#000;letter-spacing:-0.133px;">Insert Silence</span>
<span class="t" id="t40" style="left:149.79999999999998px;top:193.69px;font-size:11px;color:#000;letter-spacing:-0.250px;">Normalization</span>
<span class="t" id="t41" style="left:149.79999999999998px;top:215.69px;font-size:11px;color:#000;letter-spacing:-0.110px;">Reverse</span>
<span class="t" id="t42" style="left:149.79999999999998px;top:237.69px;font-size:11px;color:#000;letter-spacing:0.447px;">Invert</span>
<span class="t" id="t43" style="left:150.39999999999998px;top:259.69px;font-size:11px;color:#000;letter-spacing:-0.207px;">Amplify (Decrease)</span>
<span class="t" id="t44" style="left:150.39999999999998px;top:281.69px;font-size:11px;color:#000;letter-spacing:-0.069px;">Amplify (Increase)</span>
<span class="t" id="t45" style="left:15.599999999999998px;top:349.29px;font-size:11px;color:#000;letter-spacing:-0.386px;">Main</span>
<span class="t" id="t46" style="left:408.6272727272727px;top:348.44px;font-size:12px;color:#1c8a20;font-weight:bold;letter-spacing:0.349px;text-decoration:underline;">Try </span>
<span class="t" id="t47" style="left:430.72727272727275px;top:348.44px;font-size:12px;color:#1c8a20;font-weight:bold;letter-spacing:0.270px;text-decoration:underline;">an </span>
<span class="t" id="t48" style="left:448.22727272727275px;top:348.44px;font-size:12px;color:#1c8a20;font-weight:bold;letter-spacing:-0.128px;text-decoration:underline;">advanced </span>
<span class="t" id="t49" style="left:505.1272727272727px;top:348.44px;font-size:12px;color:#1c8a20;font-weight:bold;letter-spacing:0.040px;text-decoration:underline;">version </span>
<span class="t" id="t50" style="left:550.8272727272728px;top:348.44px;font-size:12px;color:#1c8a20;font-weight:bold;letter-spacing:-0.006px;text-decoration:underline;">of </span>
<span class="t" id="t51" style="left:564.8272727272728px;top:348.44px;font-size:12px;color:#1c8a20;font-weight:bold;letter-spacing:0.001px;text-decoration:underline;">Wave </span>
<span class="t" id="t52" style="left:598.4272727272727px;top:348.44px;font-size:12px;color:#1c8a20;font-weight:bold;letter-spacing:-0.188px;text-decoration:underline;">Editor!</span>
<span class="t" id="t53" style="left:33.800000000000004px;top:376.89px;font-size:11px;color:#000;letter-spacing:-0.230px;">Selection</span>
<span class="t" id="t54" style="left:281.2px;top:377.29px;font-size:11px;color:#000;letter-spacing:-0.336px;">Cursor</span>
<span class="t" id="t55" style="left:281.2px;top:432.49px;font-size:11px;color:#000;letter-spacing:-0.366px;">Levels</span>
<span class="t" id="t56" style="left:587.2px;top:376.89px;font-size:11px;color:#000;letter-spacing:-0.584px;">Volume</span>
<span class="t" id="t57" style="left:28.0px;top:407.69px;font-size:11px;color:#000;letter-spacing:-0.284px;">Begin:</span>
<span class="t" id="t58" style="left:28.0px;top:439.99px;font-size:11px;color:#000;letter-spacing:-0.185px;">End:</span>
<span class="t" id="t59" style="left:73.2px;top:406.29px;font-size:11px;color:#000;letter-spacing:0.074px;">000:00.000</span>
<span class="t" id="t60" style="left:73.2px;top:439.69px;font-size:11px;color:#000;letter-spacing:0.074px;">000:00.000</span>
<span class="t" id="t61" style="left:196.0px;top:405.29px;font-size:11px;color:#000;letter-spacing:-0.595px;">Pick</span>
<span class="t" id="t62" style="left:196.0px;top:439.09px;font-size:11px;color:#000;letter-spacing:-0.595px;">Pick</span>
<span class="t" id="t63" style="left:86.2px;top:466.29px;font-size:11px;color:#000;letter-spacing:-0.252px;">Selected</span>
<span class="t" id="t64" style="left:349.20000000000005px;top:385.77px;font-size:33px;color:#000;font-weight:bold;letter-spacing:-0.516px;">00:00.000</span>
<span class="t" id="t65" style="left:11.0px;top:505.19px;font-size:11px;color:#000;letter-spacing:0.318px;">Format: </span>
<span class="t" id="t66" style="left:53.900000000000006px;top:505.19px;font-size:11px;color:#000;letter-spacing:0.091px;">44100 </span>
<span class="t" id="t67" style="left:87.5px;top:505.19px;font-size:11px;color:#000;letter-spacing:0.259px;">Hz, </span>
<span class="t" id="t68" style="left:107.5px;top:505.19px;font-size:11px;color:#000;letter-spacing:0.456px;">2 </span>
<span class="t" id="t69" style="left:117.0px;top:505.19px;font-size:11px;color:#000;letter-spacing:0.092px;">Ch.</span>
<span class="t" id="t70" style="left:163.0px;top:505.19px;font-size:11px;color:#000;letter-spacing:0.305px;">Cursor </span>
<span class="t" id="t71" style="left:200.6px;top:505.19px;font-size:11px;color:#000;letter-spacing:0.425px;">Position: </span>
<span class="t" id="t72" style="left:249.5px;top:505.19px;font-size:11px;color:#000;letter-spacing:-0.182px;">00:00.000</span>
<span class="t" id="t73" style="left:313.4px;top:505.19px;font-size:11px;color:#000;letter-spacing:0.299px;">Max. </span>
<span class="t" id="t74" style="left:341.2px;top:505.19px;font-size:11px;color:#000;letter-spacing:0.570px;">Amplitude: </span>
<span class="t" id="t75" style="left:401.9px;top:505.19px;font-size:11px;color:#000;letter-spacing:1.006px;">0 </span>
<span class="t" id="t76" style="left:412.5px;top:505.19px;font-size:11px;color:#000;letter-spacing:-0.384px;">dB</span>
<span class="t" id="t77" style="left:462.59999999999997px;top:505.19px;font-size:11px;color:#000;letter-spacing:0.450px;">Duration: </span>
<span class="t" id="t78" style="left:514.2px;top:505.19px;font-size:11px;color:#000;letter-spacing:-0.166px;">0:02:49.640</span>
<span class="t" id="t79" style="left:8px;top:-0.00px;font-size:30px;color:rgba(105,112,125,.40);letter-spacing:0.022px;font-family:'Liberation Serif',serif;text-shadow:1px 1px 0 rgba(255,255,255,.5);">programy.net.pl</span>
<span class="t" id="t80" style="left:467.5px;top:491.00px;font-size:30px;color:rgba(125,132,150,.30);letter-spacing:-0.111px;clip-path:inset(8.5px 0 0 0);font-family:'Liberation Serif',serif;text-shadow:1px 1px 0 rgba(255,255,255,.55);">programy.net.pl</span>
</body></html>
